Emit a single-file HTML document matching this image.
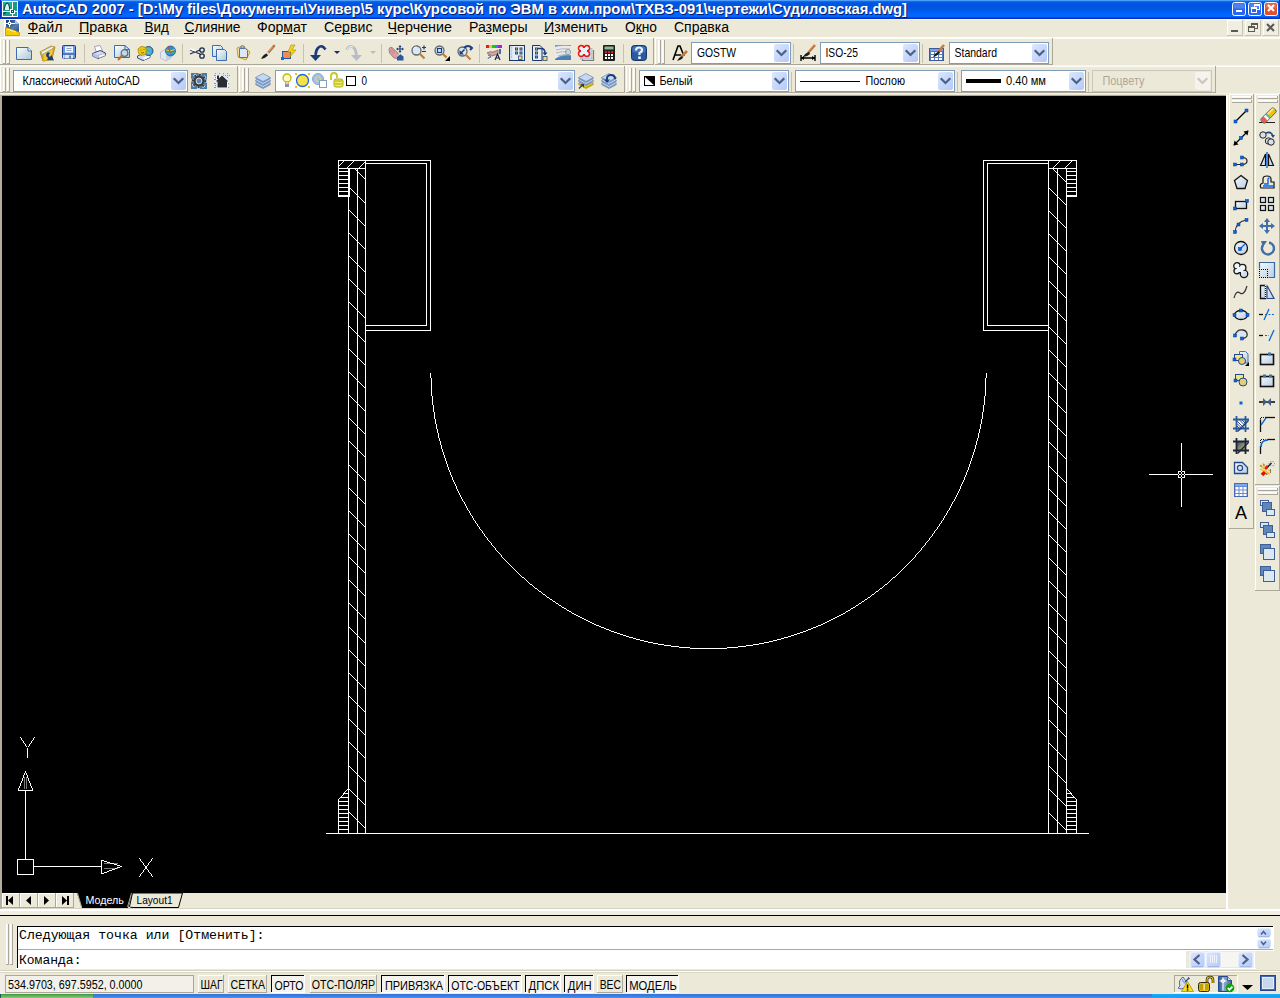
<!DOCTYPE html>
<html><head><meta charset="utf-8"><style>html,body{margin:0;padding:0;background:#ece9d8;overflow:hidden}svg{display:block}</style></head>
<body><svg width="1280" height="998" viewBox="0 0 1280 998"><defs>
<linearGradient id="gBtn" x1="0" y1="0" x2="1" y2="1"><stop offset="0" stop-color="#dde7fe"/><stop offset="1" stop-color="#b3c9f7"/></linearGradient>
<linearGradient id="gDoc" x1="0" y1="0" x2="1" y2="1"><stop offset="0" stop-color="#ffffff"/><stop offset="1" stop-color="#a9c6d6"/></linearGradient>
<linearGradient id="gBlueSq" x1="0" y1="0" x2="1" y2="1"><stop offset="0" stop-color="#f4f8fc"/><stop offset="1" stop-color="#b9cde4"/></linearGradient>
<linearGradient id="gFolder" x1="0" y1="0" x2="0" y2="1"><stop offset="0" stop-color="#ffe680"/><stop offset="1" stop-color="#e6a800"/></linearGradient>
</defs>
<rect x="0" y="0" width="1280" height="998" fill="#ece9d8" />
<rect x="0" y="0" width="1280" height="1" fill="#4d9dfb" />
<rect x="0" y="1" width="1280" height="1" fill="#0a6af4" />
<rect x="0" y="2" width="1280" height="1" fill="#005ce6" />
<rect x="0" y="3" width="1280" height="1" fill="#0055df" />
<rect x="0" y="4" width="1280" height="1" fill="#0054e1" />
<rect x="0" y="5" width="1280" height="1" fill="#0054e1" />
<rect x="0" y="6" width="1280" height="1" fill="#0054e1" />
<rect x="0" y="7" width="1280" height="1" fill="#0055e3" />
<rect x="0" y="8" width="1280" height="1" fill="#0056e5" />
<rect x="0" y="9" width="1280" height="1" fill="#0058e8" />
<rect x="0" y="10" width="1280" height="1" fill="#005aed" />
<rect x="0" y="11" width="1280" height="1" fill="#005ef2" />
<rect x="0" y="12" width="1280" height="1" fill="#0060f6" />
<rect x="0" y="13" width="1280" height="1" fill="#0064fb" />
<rect x="0" y="14" width="1280" height="1" fill="#0066ff" />
<rect x="0" y="15" width="1280" height="1" fill="#0066ff" />
<rect x="0" y="16" width="1280" height="1" fill="#0066fd" />
<rect x="0" y="17" width="1280" height="1" fill="#0046d8" />
<rect x="0" y="18" width="1280" height="1" fill="#0033c6" />
<rect x="0" y="0" width="1" height="19" fill="#0030b8" />
<rect x="1" y="1" width="1" height="18" fill="#0046d8" />
<rect x="1279" y="0" width="1" height="19" fill="#0030b8" />
<rect x="2" y="1" width="16" height="16" fill="#fff" />
<rect x="3" y="2" width="14" height="14" fill="#20a08c" />
<path d="M3 2 h8 v8 h-8z" fill="#28b09a"/>
<path d="M4 10 Q5 4 7 3 Q9 3 10 10" fill="#d8f4ee" stroke="#0a4a3e" stroke-width="1.2"/>
<path d="M3.5 14 L6 12" stroke="#0a3a30" stroke-width="1.2"/>
<rect x="12" y="2" width="1" height="14" fill="#fff" />
<rect x="3" y="11" width="14" height="1" fill="#fff" />
<rect x="10" y="9" width="5" height="5" fill="#fff" />
<rect x="11" y="10" width="3" height="3" fill="#0b5a4a" />
<rect x="12" y="11" width="1" height="1" fill="#fff" />
<rect x="13" y="2" width="3" height="8" fill="#1a9a84" />
<text x="23" y="15" font-family="Liberation Sans" font-size="14.6" font-weight="bold" fill="#0a1a6a" textLength="885" lengthAdjust="spacingAndGlyphs" >AutoCAD 2007 - [D:\My files\Документы\Универ\5 курс\Курсовой по ЭВМ в хим.пром\ТХВЗ-091\чертежи\Судиловская.dwg]</text>
<text x="22" y="14" font-family="Liberation Sans" font-size="14.6" font-weight="bold" fill="#fff" textLength="885" lengthAdjust="spacingAndGlyphs" >AutoCAD 2007 - [D:\My files\Документы\Универ\5 курс\Курсовой по ЭВМ в хим.пром\ТХВЗ-091\чертежи\Судиловская.dwg]</text>
<rect x="1232.5" y="2.5" width="13" height="13" rx="2" fill="#2a66f0" stroke="#fff" stroke-width="1"/>
<rect x="1233.5" y="3.5" width="11" height="5" rx="1" fill="#fff" opacity="0.18"/>
<rect x="1236" y="10" width="6" height="2" fill="#fff" />
<rect x="1248.5" y="2.5" width="13" height="13" rx="2" fill="#2a66f0" stroke="#fff" stroke-width="1"/>
<rect x="1249.5" y="3.5" width="11" height="5" rx="1" fill="#fff" opacity="0.18"/>
<rect x="1254.5" y="4.5" width="5" height="5" fill="none" stroke="#fff"/>
<rect x="1254" y="4" width="6" height="2" fill="#fff" />
<rect x="1251.5" y="7.5" width="5" height="5" fill="#2a66f0" stroke="#fff"/>
<rect x="1251" y="7" width="6" height="2" fill="#fff" />
<rect x="1264.5" y="2.5" width="13" height="13" rx="2" fill="#e0502a" stroke="#fff" stroke-width="1"/>
<rect x="1265.5" y="3.5" width="11" height="5" rx="1" fill="#fff" opacity="0.18"/>
<path d="M1268 5 L1274 11 M1274 5 L1268 11" stroke="#fff" stroke-width="2"/>
<rect x="0" y="19" width="1280" height="1" fill="#fbf6e6" />
<rect x="0" y="37" width="1280" height="1" fill="#fff" />
<rect x="0" y="38" width="1280" height="1" fill="#fbfaf4" />
<rect x="4" y="20" width="16" height="16" fill="#fff" />
<defs><linearGradient id="gMi" x1="0" y1="0" x2="1" y2="1"><stop offset="0" stop-color="#10407e"/><stop offset="0.6" stop-color="#5a7cb0"/><stop offset="1" stop-color="#1a4a8a"/></linearGradient></defs>
<path d="M6 20 H15 L19 24 V33 H6 Z" fill="url(#gMi)"/>
<path d="M15 20 L19 24 H15 Z" fill="#b4c6dc"/>
<rect x="6" y="23" width="9" height="1" fill="#fff" />
<rect x="9" y="20" width="1" height="7" fill="#fff" />
<rect x="8" y="22" width="3" height="3" fill="#fff" />
<rect x="9" y="23" width="1" height="1" fill="#1a4a8a" />
<path d="M5.5 27.5 L19.5 32.5 V35.5 H5.5 Z" fill="#f2cc00" stroke="#d09c00" stroke-width="1"/>
<path d="M7 29 L16 32" stroke="#fff2a0" stroke-width="1.2"/>
<text x="27.5" y="32" font-family="Liberation Sans" font-size="13.8" font-weight="normal" fill="#000" textLength="35.0" lengthAdjust="spacingAndGlyphs" >Файл</text>
<text x="79.0" y="32" font-family="Liberation Sans" font-size="13.8" font-weight="normal" fill="#000" textLength="48.5" lengthAdjust="spacingAndGlyphs" >Правка</text>
<text x="144.5" y="32" font-family="Liberation Sans" font-size="13.8" font-weight="normal" fill="#000" textLength="24.30000000000001" lengthAdjust="spacingAndGlyphs" >Вид</text>
<text x="184.5" y="32" font-family="Liberation Sans" font-size="13.8" font-weight="normal" fill="#000" textLength="56.0" lengthAdjust="spacingAndGlyphs" >Слияние</text>
<text x="257.0" y="32" font-family="Liberation Sans" font-size="13.8" font-weight="normal" fill="#000" textLength="50.0" lengthAdjust="spacingAndGlyphs" >Формат</text>
<text x="324.0" y="32" font-family="Liberation Sans" font-size="13.8" font-weight="normal" fill="#000" textLength="48.5" lengthAdjust="spacingAndGlyphs" >Сервис</text>
<text x="387.5" y="32" font-family="Liberation Sans" font-size="13.8" font-weight="normal" fill="#000" textLength="64.5" lengthAdjust="spacingAndGlyphs" >Черчение</text>
<text x="469.0" y="32" font-family="Liberation Sans" font-size="13.8" font-weight="normal" fill="#000" textLength="58.5" lengthAdjust="spacingAndGlyphs" >Размеры</text>
<text x="544.0" y="32" font-family="Liberation Sans" font-size="13.8" font-weight="normal" fill="#000" textLength="64.0" lengthAdjust="spacingAndGlyphs" >Изменить</text>
<text x="625.0" y="32" font-family="Liberation Sans" font-size="13.8" font-weight="normal" fill="#000" textLength="32.0" lengthAdjust="spacingAndGlyphs" >Окно</text>
<text x="674.0" y="32" font-family="Liberation Sans" font-size="13.8" font-weight="normal" fill="#000" textLength="55.0" lengthAdjust="spacingAndGlyphs" >Справка</text>
<rect x="28" y="33" width="10" height="1" fill="#000" />
<rect x="79" y="33" width="10" height="1" fill="#000" />
<rect x="144" y="33" width="10" height="1" fill="#000" />
<rect x="184" y="33" width="10" height="1" fill="#000" />
<rect x="283" y="33" width="10" height="1" fill="#000" />
<rect x="342" y="33" width="8" height="1" fill="#000" />
<rect x="388" y="33" width="9" height="1" fill="#000" />
<rect x="486" y="33" width="6" height="1" fill="#000" />
<rect x="544" y="33" width="10" height="1" fill="#000" />
<rect x="636" y="33" width="6" height="1" fill="#000" />
<rect x="700" y="33" width="7" height="1" fill="#000" />
<rect x="1227" y="20" width="16" height="1" fill="#fff" />
<rect x="1227" y="20" width="1" height="16" fill="#fff" />
<rect x="1227" y="35" width="16" height="1" fill="#c8c4b0" />
<rect x="1242" y="20" width="1" height="16" fill="#c8c4b0" />
<rect x="1228" y="21" width="14" height="14" fill="#f0eee4" />
<rect x="1231" y="30" width="7" height="2" fill="#5a5a50" />
<rect x="1245" y="20" width="16" height="1" fill="#fff" />
<rect x="1245" y="20" width="1" height="16" fill="#fff" />
<rect x="1245" y="35" width="16" height="1" fill="#c8c4b0" />
<rect x="1260" y="20" width="1" height="16" fill="#c8c4b0" />
<rect x="1246" y="21" width="14" height="14" fill="#f0eee4" />
<rect x="1251.5" y="23.5" width="6" height="5" fill="none" stroke="#5a5a50"/>
<rect x="1251" y="23" width="7" height="2" fill="#5a5a50" />
<rect x="1248.5" y="26.5" width="6" height="5" fill="#f0eee4" stroke="#5a5a50"/>
<rect x="1248" y="26" width="7" height="2" fill="#5a5a50" />
<rect x="1263" y="20" width="16" height="1" fill="#fff" />
<rect x="1263" y="20" width="1" height="16" fill="#fff" />
<rect x="1263" y="35" width="16" height="1" fill="#c8c4b0" />
<rect x="1278" y="20" width="1" height="16" fill="#c8c4b0" />
<rect x="1264" y="21" width="14" height="14" fill="#f0eee4" />
<path d="M1267 24 L1274 31 M1274 24 L1267 31" stroke="#5a5a50" stroke-width="2"/>
<rect x="0" y="39" width="1280" height="26" fill="#ece9d8" />
<rect x="0" y="38" width="1" height="27" fill="#fff" />
<rect x="0" y="38" width="654" height="1" fill="#fbfaf4" />
<rect x="653" y="38" width="1" height="27" fill="#aca899" />
<rect x="0" y="64" width="654" height="1" fill="#aca899" />
<rect x="3" y="40" width="1" height="24" fill="#fff" />
<rect x="4" y="40" width="1" height="24" fill="#f7f5ec" />
<rect x="5" y="40" width="1" height="24" fill="#aca899" />
<rect x="3" y="63" width="3" height="1" fill="#aca899" />
<rect x="7" y="40" width="1" height="24" fill="#fff" />
<rect x="8" y="40" width="1" height="24" fill="#f7f5ec" />
<rect x="9" y="40" width="1" height="24" fill="#aca899" />
<rect x="7" y="63" width="3" height="1" fill="#aca899" />
<rect x="655" y="38" width="1" height="27" fill="#fff" />
<rect x="655" y="38" width="398" height="1" fill="#fbfaf4" />
<rect x="1052" y="38" width="1" height="27" fill="#aca899" />
<rect x="655" y="64" width="398" height="1" fill="#aca899" />
<rect x="658" y="40" width="1" height="24" fill="#fff" />
<rect x="659" y="40" width="1" height="24" fill="#f7f5ec" />
<rect x="660" y="40" width="1" height="24" fill="#aca899" />
<rect x="658" y="63" width="3" height="1" fill="#aca899" />
<rect x="662" y="40" width="1" height="24" fill="#fff" />
<rect x="663" y="40" width="1" height="24" fill="#f7f5ec" />
<rect x="664" y="40" width="1" height="24" fill="#aca899" />
<rect x="662" y="63" width="3" height="1" fill="#aca899" />
<rect x="0" y="65" width="1280" height="1" fill="#f7f5ec" />
<rect x="0" y="66" width="1280" height="1" fill="#fff" />
<rect x="0" y="66" width="1" height="27" fill="#fff" />
<rect x="0" y="66" width="238" height="1" fill="#fbfaf4" />
<rect x="237" y="66" width="1" height="27" fill="#aca899" />
<rect x="0" y="92" width="238" height="1" fill="#aca899" />
<rect x="3" y="68" width="1" height="24" fill="#fff" />
<rect x="4" y="68" width="1" height="24" fill="#f7f5ec" />
<rect x="5" y="68" width="1" height="24" fill="#aca899" />
<rect x="3" y="91" width="3" height="1" fill="#aca899" />
<rect x="7" y="68" width="1" height="24" fill="#fff" />
<rect x="8" y="68" width="1" height="24" fill="#f7f5ec" />
<rect x="9" y="68" width="1" height="24" fill="#aca899" />
<rect x="7" y="91" width="3" height="1" fill="#aca899" />
<rect x="239" y="66" width="1" height="27" fill="#fff" />
<rect x="239" y="66" width="386" height="1" fill="#fbfaf4" />
<rect x="624" y="66" width="1" height="27" fill="#aca899" />
<rect x="239" y="92" width="386" height="1" fill="#aca899" />
<rect x="242" y="68" width="1" height="24" fill="#fff" />
<rect x="243" y="68" width="1" height="24" fill="#f7f5ec" />
<rect x="244" y="68" width="1" height="24" fill="#aca899" />
<rect x="242" y="91" width="3" height="1" fill="#aca899" />
<rect x="246" y="68" width="1" height="24" fill="#fff" />
<rect x="247" y="68" width="1" height="24" fill="#f7f5ec" />
<rect x="248" y="68" width="1" height="24" fill="#aca899" />
<rect x="246" y="91" width="3" height="1" fill="#aca899" />
<rect x="626" y="66" width="1" height="27" fill="#fff" />
<rect x="626" y="66" width="590" height="1" fill="#fbfaf4" />
<rect x="1215" y="66" width="1" height="27" fill="#aca899" />
<rect x="626" y="92" width="590" height="1" fill="#aca899" />
<rect x="629" y="68" width="1" height="24" fill="#fff" />
<rect x="630" y="68" width="1" height="24" fill="#f7f5ec" />
<rect x="631" y="68" width="1" height="24" fill="#aca899" />
<rect x="629" y="91" width="3" height="1" fill="#aca899" />
<rect x="633" y="68" width="1" height="24" fill="#fff" />
<rect x="634" y="68" width="1" height="24" fill="#f7f5ec" />
<rect x="635" y="68" width="1" height="24" fill="#aca899" />
<rect x="633" y="91" width="3" height="1" fill="#aca899" />
<rect x="0" y="93" width="1280" height="1" fill="#f4f2e6" />
<rect x="0" y="94" width="1280" height="1" fill="#e8e5d4" />
<rect x="84" y="44" width="1" height="19" fill="#c5c2b0" />
<rect x="182" y="44" width="1" height="19" fill="#c5c2b0" />
<rect x="303" y="44" width="1" height="19" fill="#c5c2b0" />
<rect x="381" y="44" width="1" height="19" fill="#c5c2b0" />
<rect x="479" y="44" width="1" height="19" fill="#c5c2b0" />
<rect x="623" y="44" width="1" height="19" fill="#c5c2b0" />
<rect x="793" y="44" width="1" height="19" fill="#c5c2b0" />
<rect x="922" y="44" width="1" height="19" fill="#c5c2b0" />
<rect x="791" y="72" width="1" height="20" fill="#c5c2b0" />
<rect x="957" y="72" width="1" height="20" fill="#c5c2b0" />
<rect x="1088" y="72" width="1" height="20" fill="#c5c2b0" />
<g transform="translate(16,45)"><path d="M0.5 2.5 H12 L15.5 6 V14.5 H0.5 Z" fill="url(#gDoc)" stroke="#3c6cb4"/><path d="M12 2.5 V6 H15.5" fill="#fff" stroke="#3c6cb4"/></g>
<g transform="translate(39,45)"><path d="M1 7 L12 1 L16 2 L13 14 L4 16 Z" fill="#d8aa30" stroke="#b08418" stroke-width="0.8"/><path d="M2 7 L13 1.5 L14.5 2.5 L5 12 Z" fill="#eef4fb" stroke="#9ab0c8" stroke-width="0.6"/><path d="M4 9 L15 3 L12 15 L4 16 Z" fill="#f0c838" stroke="#c09820" stroke-width="0.8"/><path d="M9 7 Q5 10 9 13 L8 15 L15 15.5 L12.5 10 L11 12 Q8.5 10.5 11 8 Z" fill="#1a3c7a"/></g>
<g transform="translate(62,45)"><rect x="0.5" y="0.5" width="13" height="13" rx="1" fill="#6a9ae6" stroke="#24408a"/><rect x="3" y="1.5" width="8" height="6" fill="#f4f8ff"/><path d="M4.5 3.5 h5 M4.5 5.5 h5" stroke="#8aa2c8"/><rect x="1" y="8.5" width="12" height="1" fill="#3a5aa0"/><rect x="3" y="10" width="8" height="3.5" fill="#dde6ee"/><rect x="7" y="10.5" width="2" height="3" fill="#6a8a6a"/><rect x="1" y="10" width="1.5" height="3.5" fill="#bfe0ff"/></g>
<g transform="translate(92,45)"><path d="M2.5 1.5 L8 0.5 L10.5 5.5 L4.5 7.5 Z" fill="#fff" stroke="#8890b0" stroke-width="0.8"/><path d="M0.5 8.5 L8 5.5 L13.5 8 V10.5 L6 13.5 L0.5 11 Z" fill="#d6dcf0" stroke="#3c4680"/><path d="M6 10.5 L12.5 8.5 L13.5 10.5 L7 13 Z" fill="#fff" stroke="#8890b0" stroke-width="0.6"/><path d="M0.5 11 L6 13.5 V10 L0.5 8.5" fill="#b8c0e0"/></g>
<g transform="translate(114,45)"><path d="M0.5 0.5 H11 L15.5 4.5 V12.5 H0.5 Z" fill="url(#gDoc)" stroke="#3c6cb4"/><path d="M11 0.5 V4.5 H15.5" fill="none" stroke="#3c6cb4"/><circle cx="10.5" cy="8" r="3.3" fill="#c0d8ea" stroke="#606a78" stroke-width="1.2"/><path d="M8 10.5 L4 15" stroke="#b87030" stroke-width="2"/></g>
<g transform="translate(137,45)"><path d="M0.5 11 L7 8 L13 10.5 V12.5 L6 15.5 L0.5 13 Z" fill="#d6dcf0" stroke="#3c4680"/><path d="M6 12.5 L12 10.5 L13 12 L7 15 Z" fill="#fff"/><circle cx="11.5" cy="6" r="4.5" fill="#48a8e0" stroke="#1a4a80"/><path d="M9 3 q3 2 5 1 M8 8 q3 -1 6 1" stroke="#7ad05a" stroke-width="1" fill="none"/><path d="M1 4 L4 1.5 L8 2 L9.5 5 L8.5 9.5 L4 10.5 L1.5 8 Z" fill="#f0c818" stroke="#a88400" stroke-width="0.8"/><path d="M3.5 5 h1 M6.5 4.5 h1 M4 7.5 q1.5 1 3 0" stroke="#7a5a00" stroke-width="0.9" fill="none"/></g>
<g transform="translate(160,45)"><path d="M0.5 7 L6 4 L11 6.5 V13 L6 16 L0.5 13 Z" fill="#e4e8f2" stroke="#b0b8c8" stroke-width="0.8"/><path d="M6 9.5 V16 L11 13 V6.5 Z" fill="#c8d0e0"/><circle cx="10.5" cy="6" r="5" fill="#2c8ed6" stroke="#185a98" stroke-width="0.8"/><path d="M6 5 Q10 7 15 4.5" stroke="#e8d020" stroke-width="1" fill="none"/><path d="M8.5 1.5 Q9 7 12 10.5" stroke="#e03a2a" stroke-width="1" fill="none"/><path d="M6.5 8 Q11 9 14.5 7.5" stroke="#60c040" stroke-width="0.9" fill="none"/></g>
<g transform="translate(189,45)"><path d="M1 5 L11 9 M1 9 L11 5" stroke="#1c2a4a" stroke-width="1.2"/><path d="M1 4 l6 2" stroke="#fff" stroke-width="1.5"/><circle cx="13" cy="5" r="2.2" fill="none" stroke="#1c2a4a" stroke-width="1.3"/><circle cx="13" cy="11" r="2.2" fill="none" stroke="#1c2a4a" stroke-width="1.3"/></g>
<g transform="translate(212,45)"><path d="M0.5 0.5 h8 l2 2 v9 h-10 z" fill="url(#gDoc)" stroke="#3c6cb4"/><path d="M4.5 4.5 h8 l2 2 v9 h-10 z" fill="url(#gDoc)" stroke="#3c6cb4"/></g>
<g transform="translate(235,45)"><path d="M2 3 l6 -2 l7 6 l-4 8 l-8 -3 z" fill="#f2dca0" stroke="#c8a040"/><path d="M4.5 3.5 h6 l2 2 v7 h-8 z" fill="#dce8f4" stroke="#4a76b8"/><path d="M6 1 h3 v2 h-3z" fill="#fff" stroke="#707070"/></g>
<g transform="translate(259,45)"><path d="M15 1 L9 8" stroke="#b87848" stroke-width="2.6" stroke-linecap="round"/><path d="M13.5 2 L10 6" stroke="#e8a870" stroke-width="0.8"/><path d="M9.5 7.5 L7.5 9.5" stroke="#d0d8e0" stroke-width="2.4"/><path d="M7.5 8.5 Q4 9.5 2 14 Q6 13.5 9 10.5 Z" fill="#1c1c1c"/></g>
<g transform="translate(281,45)"><rect x="1.5" y="6.5" width="8" height="7" fill="#f08a58" stroke="#2a58a8"/><rect x="0" y="12" width="3" height="3" fill="#0a6ae8"/><path d="M10 0 l4 0 l-3 5 h4 l-6 7 l1 -5 h-3 z" fill="#f8d418" stroke="#a88a00" stroke-width="0.6"/></g>
<g transform="translate(310,45)"><path d="M15.5 4.5 Q12 -1 8 3 Q6 5 5.5 10" stroke="#1a3c7a" stroke-width="2.6" fill="none"/><path d="M0 10 H11 L5.5 16 Z" fill="#1a3c7a"/></g>
<g transform="translate(346,45)"><path d="M0.5 4.5 Q4 -1 8 3 Q10 5 10.5 10" stroke="#b8bcc8" stroke-width="2.6" fill="none"/><path d="M5 10 H16 L10.5 16 Z" fill="#b8bcc8"/><path d="M1 4 Q4 0 7 2" stroke="#fff" stroke-width="0.8" fill="none"/></g>
<g transform="translate(388,45)"><path d="M1 4 Q1.5 1.5 4 2.5 L10 8 L11.5 11 L9 13.5 L6 13 L1.5 8 Z" fill="#d8a0a0" stroke="#a07070" stroke-width="0.8"/><path d="M3 3.5 l4 3.5 M2 5.5 l4 3" stroke="#b07878" stroke-width="0.7"/><path d="M9 12 L12 9 L15.5 11.5 V15.5 H9 Z" fill="#2a5a9a"/><path d="M9.5 11 L12 9" stroke="#fff" stroke-width="0.8"/><path d="M12 1 V7 M9 4 H15" stroke="#1a3c7a" stroke-width="1.2"/><path d="M10.5 2 L12 0 L13.5 2 Z M10.5 6 L12 8 L13.5 6 Z M10 2.5 L8 4 L10 5.5 Z M14 2.5 L16 4 L14 5.5 Z" fill="#1a3c7a"/></g>
<g transform="translate(411,45)"><circle cx="5.5" cy="5.5" r="4.5" fill="#d8e8f4" stroke="#606870" stroke-width="1.3"/><path d="M2.5 3.5 q1 -1.5 3 -1.5" stroke="#fff" fill="none"/><path d="M8.5 8.5 L13.5 13.5" stroke="#c0803a" stroke-width="2.3"/><path d="M11 2.5 h4 M13 0.5 v4 M11 6.5 h4" stroke="#1a3c7a" stroke-width="1.2"/></g>
<g transform="translate(434,45)"><circle cx="5.5" cy="5.5" r="4.5" fill="#d8e8f4" stroke="#606870" stroke-width="1.3"/><rect x="3.5" y="3.5" width="4" height="4" fill="none" stroke="#1a3c7a" stroke-width="1.2"/><path d="M8.5 8.5 L12.5 12.5" stroke="#c0803a" stroke-width="2.3"/><path d="M11 16 L16 11 V16 Z" fill="#000"/></g>
<g transform="translate(457,45)"><circle cx="5.5" cy="6.5" r="4.5" fill="#d8e8f4" stroke="#606870" stroke-width="1.3"/><path d="M8.5 9.5 L13.5 14.5" stroke="#c0803a" stroke-width="2.3"/><path d="M3.5 8.5 L7.5 4.5" stroke="#1a3c7a" stroke-width="1.6"/><path d="M2.5 5 V9.5 H7 Z" fill="#1a3c7a"/><path d="M7 3 Q11 -1 15 3 L13 5" stroke="#1a3c7a" stroke-width="2" fill="none"/></g>
<g transform="translate(486,45)"><rect x="0" y="0" width="3" height="3" fill="#e01c1c"/><rect x="3" y="0" width="3" height="3" fill="#e8c81c"/><rect x="6" y="0" width="3" height="3" fill="#1cc81c"/><rect x="9" y="0" width="3" height="3" fill="#1c8ce8"/><rect x="12" y="0" width="4" height="3" fill="#b01ce0"/><path d="M1 8 q3 -2 6 -1 l5 -2 v4 l-6 2 z" fill="#d8a09a" stroke="#8a5a58" stroke-width="0.7"/><path d="M2 10 q3 1 3 2 q-3 0 -3 2" fill="none" stroke="#3c6cb4"/><path d="M9 15 l2.5 -6 l2.5 6 M10 13 h3" stroke="#1c2a4a" stroke-width="1.2" fill="none"/><rect x="13" y="4" width="2" height="5" fill="#3c6cb4"/></g>
<g transform="translate(509,45)"><rect x="0.5" y="0.5" width="15" height="15" fill="#e8eef8" stroke="#1a3470"/><rect x="1" y="1" width="2.5" height="14" fill="#d0dcf0"/><g fill="#f0c818"><rect x="2" y="2" width="1" height="1.5"/><rect x="2" y="5" width="1" height="1.5"/><rect x="2" y="8" width="1" height="1.5"/><rect x="2" y="11" width="1" height="1.5"/></g><g fill="#2a4a7a"><rect x="6" y="2.5" width="3" height="3"/><rect x="10.5" y="2.5" width="3" height="3"/><rect x="6" y="6.5" width="3" height="3"/><rect x="10.5" y="6.5" width="3" height="3"/></g><g fill="#e8d858"><rect x="7" y="3.5" width="1" height="1"/><rect x="11.5" y="3.5" width="1" height="1"/><rect x="11.5" y="7.5" width="1" height="1"/></g><rect x="7" y="7.5" width="1" height="1" fill="#60d0c0"/><rect x="9.5" y="11" width="3.5" height="3.5" fill="#f0e070" stroke="#2a4a7a" stroke-width="0.8"/></g>
<g transform="translate(532,45)"><path d="M0.5 0.5 H8 L10 2.5 V15.5 H0.5 Z" fill="#e8eef8" stroke="#1a3470"/><g fill="#2a4a7a"><rect x="3" y="2.5" width="3" height="3"/><rect x="3" y="6.5" width="3" height="3"/><rect x="3" y="10.5" width="3" height="3"/></g><g fill="#e8d858"><rect x="4" y="3.5" width="1" height="1"/><rect x="4" y="7.5" width="1" height="1"/></g><rect x="4" y="11.5" width="1" height="1" fill="#60d0c0"/><path d="M6 3.5 H9 Q13 3.5 13 8" stroke="#1a3c7a" stroke-width="1.5" fill="none"/><path d="M10.5 7.5 H15.5 L13 10.5 Z" fill="#1a3c7a"/><rect x="11" y="11.5" width="4" height="4" fill="#f0e070" stroke="#2a4a7a" stroke-width="0.8"/></g>
<g transform="translate(555,45)"><rect x="0" y="0" width="16" height="15" fill="#6aa0d0"/><path d="M0 2 Q6 0 16 1 V10 Q8 8 0 14 Z" fill="#e8eaee"/><path d="M1 5 Q7 3 15 4 M1 8 Q7 6 14 7 M3 11 Q8 9 12 10" stroke="#b0b4bc" stroke-width="1" fill="none"/><circle cx="13" cy="7" r="2.5" fill="none" stroke="#9098a0"/><path d="M0 14 Q8 9 16 11 V15 H0 Z" fill="#3a6a9a" opacity="0.6"/></g>
<g transform="translate(578,45)"><path d="M4.5 5 V15.5 H15.5 V5" fill="none" stroke="#7a7a7a" stroke-width="1.2"/><rect x="2.5" y="3.5" width="11.5" height="10.5" fill="#c8d8ea" stroke="#a0a8b0" stroke-width="0.6"/><g stroke="#e81818" stroke-width="1.7" fill="#e8f0f8"><circle cx="3.2" cy="3.2" r="2.6"/><circle cx="8.8" cy="3.2" r="2.6"/><circle cx="3.2" cy="8.8" r="2.6"/><circle cx="8.8" cy="8.8" r="2.6"/></g><g fill="#e8f0f8"><circle cx="3.2" cy="3.2" r="1.8"/><circle cx="8.8" cy="3.2" r="1.8"/><circle cx="3.2" cy="8.8" r="1.8"/><circle cx="8.8" cy="8.8" r="1.8"/><rect x="3" y="3" width="6" height="6"/></g></g>
<g transform="translate(601,45)"><rect x="2" y="0" width="12" height="16" rx="1" fill="#1c1c1c"/><rect x="3.5" y="1.5" width="9" height="3" fill="#8ab898"/><g fill="#e01c1c"><rect x="4" y="6" width="2" height="2"/><rect x="7" y="6" width="2" height="2"/><rect x="10" y="6" width="2" height="2"/></g><g fill="#fff"><rect x="4" y="9" width="2" height="2"/><rect x="7" y="9" width="2" height="2"/><rect x="10" y="9" width="2" height="2"/><rect x="4" y="12" width="2" height="2"/><rect x="7" y="12" width="2" height="2"/><rect x="10" y="12" width="2" height="2"/></g></g>
<g transform="translate(631,45)"><rect x="0.5" y="0.5" width="15" height="15" rx="3" fill="#2a5aa0" stroke="#143470"/><rect x="1.5" y="1.5" width="13" height="6" rx="2" fill="#5a90d0" opacity="0.5"/><path d="M5 5.5 Q5 2.5 8 2.5 Q11 2.5 11 5 Q11 7 8.5 8 V10" stroke="#e8f0ff" stroke-width="2.2" fill="none"/><rect x="7.2" y="11.5" width="2.6" height="2.4" fill="#fff"/></g>
<g transform="translate(672,45)"><path d="M1 15 L6 1 h2 l4 10 M3 10 h6" stroke="#000" stroke-width="1.6" fill="none"/><path d="M15 6 L9 12" stroke="#c87840" stroke-width="2.6"/><path d="M10 11 q-3 1 -5 5 q4 -1 6 -3z" fill="#1c1c1c"/></g>
<g transform="translate(800,45)"><path d="M15 0 L8 8" stroke="#c87840" stroke-width="2.6"/><path d="M9 7 q-4 1 -6 5 q4 0 7 -3z" fill="#1c1c1c"/><path d="M1 10 v6 M15 10 v6 M1 13 h14" stroke="#000" stroke-width="1.4"/><path d="M1 13 l3 -2 v4z M15 13 l-3 -2 v4z" fill="#000"/></g>
<g transform="translate(929,45)"><rect x="0.5" y="3.5" width="14" height="12" fill="#5a7ab8" stroke="#3c5a98"/><rect x="1" y="4" width="13" height="2" fill="#7aa0f0"/><g fill="#fff"><rect x="2" y="7" width="3" height="2"/><rect x="6" y="7" width="3" height="2"/><rect x="10" y="7" width="3" height="2"/><rect x="2" y="10" width="3" height="2"/><rect x="6" y="10" width="3" height="2"/><rect x="10" y="10" width="3" height="2"/><rect x="2" y="13" width="3" height="2"/><rect x="6" y="13" width="3" height="2"/><rect x="10" y="13" width="3" height="2"/></g><path d="M15 0 L9 7" stroke="#c87840" stroke-width="2.6"/><path d="M10 6 q-4 2 -6 6 q4 -1 7 -4z" fill="#1c1c1c"/></g>
<path d="M334 51 h6 l-3 3z" fill="#1c2a6a"/>
<path d="M370 51 h6 l-3 3z" fill="#b8bcc8"/>
<rect x="691" y="42" width="100" height="22" fill="#7f9db9" />
<rect x="692" y="43" width="98" height="20" fill="#fff" />
<rect x="774" y="44" width="15" height="18" rx="2" fill="url(#gBtn)"/>
<path d="M777.5 51.0 L781.5 55.0 L785.5 51.0" stroke="#4d6185" stroke-width="2.2" fill="none" stroke-linecap="square"/>
<text x="697" y="57" font-family="Liberation Sans" font-size="12.2" font-weight="normal" fill="#000" textLength="39" lengthAdjust="spacingAndGlyphs" >GOSTW</text>
<rect x="820" y="42" width="100" height="22" fill="#7f9db9" />
<rect x="821" y="43" width="98" height="20" fill="#fff" />
<rect x="903" y="44" width="15" height="18" rx="2" fill="url(#gBtn)"/>
<path d="M906.5 51.0 L910.5 55.0 L914.5 51.0" stroke="#4d6185" stroke-width="2.2" fill="none" stroke-linecap="square"/>
<text x="825.5" y="57" font-family="Liberation Sans" font-size="12.2" font-weight="normal" fill="#000" textLength="32.5" lengthAdjust="spacingAndGlyphs" >ISO-25</text>
<rect x="949" y="42" width="100" height="22" fill="#7f9db9" />
<rect x="950" y="43" width="98" height="20" fill="#fff" />
<rect x="1032" y="44" width="15" height="18" rx="2" fill="url(#gBtn)"/>
<path d="M1035.5 51.0 L1039.5 55.0 L1043.5 51.0" stroke="#4d6185" stroke-width="2.2" fill="none" stroke-linecap="square"/>
<text x="954.5" y="57" font-family="Liberation Sans" font-size="12.2" font-weight="normal" fill="#000" textLength="42.5" lengthAdjust="spacingAndGlyphs" >Standard</text>
<rect x="13" y="70" width="175" height="22" fill="#7f9db9" />
<rect x="14" y="71" width="173" height="20" fill="#fff" />
<rect x="171" y="72" width="15" height="18" rx="2" fill="url(#gBtn)"/>
<path d="M174.5 79.0 L178.5 83.0 L182.5 79.0" stroke="#4d6185" stroke-width="2.2" fill="none" stroke-linecap="square"/>
<text x="22.5" y="85" font-family="Liberation Sans" font-size="12.2" font-weight="normal" fill="#000" textLength="117.3" lengthAdjust="spacingAndGlyphs" >Классический AutoCAD</text>
<g transform="translate(191,73)"><rect x="0" y="0" width="16" height="16" fill="#4a7aa8"/><circle cx="8" cy="8" r="6.3" fill="none" stroke="#f4f4f4" stroke-width="3.4" stroke-dasharray="2.6 2.35" transform="rotate(-10 8 8)"/><circle cx="8" cy="8" r="6" fill="none" stroke="#3c3c3c" stroke-width="2.6" stroke-dasharray="2 2.7" transform="rotate(-8 8 8)"/><circle cx="8" cy="8" r="4.2" fill="none" stroke="#3c3c3c" stroke-width="2.4"/><circle cx="8" cy="8" r="2.9" fill="#5a88b8" stroke="#e8e8e8" stroke-width="0.9"/></g>
<g transform="translate(214,73)"><rect x="0" y="0" width="16" height="16" fill="#dfe6ee"/><path d="M1.5 0 V16 M5.5 0 V3 M9.5 0 V3 M13.5 0 V5 M0 2.5 H2 M11 2.5 H16 M0 6.5 H2 M0 10.5 H2 M0 14.5 H2 M14 10.5 H16 M14 14.5 H16 M5.5 14 V16 M9.5 14 V16" stroke="#8898a8" stroke-width="1" stroke-dasharray="1 1"/><path d="M1.5 8.5 L8 2.5 L14.5 8.5 H13 V14.5 H3.5 V8.5 Z M3 2.5 H5 V6 H3 Z" fill="#fff" stroke="#fff" stroke-width="1.4"/><path d="M1.5 8.5 L8 2.5 L14.5 8.5 H13 V14.5 H3.5 V8.5 Z M3 2.5 H5 V6 H3 Z" fill="#2a2c30"/></g>
<g transform="translate(255,73)"><path d="M0.5 10.5 L8 6.5 L15.5 10.5 L8 14.5 Z" fill="#c4d8f0" stroke="#6a88b8" stroke-width="0.7"/><path d="M0.5 10.5 V12 L8 16 L15.5 12 V10.5 L8 14.5 Z" fill="#7894c0"/><path d="M0.5 7.5 L8 3.5 L15.5 7.5 L8 11.5 Z" fill="#c4d8f0" stroke="#6a88b8" stroke-width="0.7"/><path d="M0.5 7.5 V9 L8 13 L15.5 9 V7.5 L8 11.5 Z" fill="#7894c0"/><path d="M0.5 4.5 L8 0.5 L15.5 4.5 L8 8.5 Z" fill="#c4d8f0" stroke="#6a88b8" stroke-width="0.7"/><path d="M0.5 4.5 V6 L8 10 L15.5 6 V4.5 L8 8.5 Z" fill="#7894c0"/></g>
<rect x="275" y="70" width="300" height="22" fill="#7f9db9" />
<rect x="276" y="71" width="298" height="20" fill="#fff" />
<rect x="558" y="72" width="15" height="18" rx="2" fill="url(#gBtn)"/>
<path d="M561.5 79.0 L565.5 83.0 L569.5 79.0" stroke="#4d6185" stroke-width="2.2" fill="none" stroke-linecap="square"/>
<g transform="translate(282.5,73)"><circle cx="4.5" cy="5" r="4" fill="#fffbd0" stroke="#c8b400" stroke-width="1.3"/><rect x="3" y="9" width="3" height="2" fill="#fffbd0" stroke="#c8b400" stroke-width="0.8"/><rect x="2.5" y="11" width="4" height="3" fill="#8a94b8"/></g>
<circle cx="302.5" cy="80.5" r="6" fill="#f8e048" stroke="#1f6ad8" stroke-width="1.3"/>
<g fill="#e8c818"><rect x="295" y="73" width="2" height="2"/><rect x="308" y="73" width="2" height="2"/><rect x="295" y="86" width="2" height="2"/><rect x="308" y="86" width="2" height="2"/></g>
<circle cx="318" cy="79" r="5.5" fill="#a4c0e0" stroke="#8aa8cc"/><circle cx="318" cy="79" r="2.5" fill="none" stroke="#e0d890"/><rect x="319.5" y="80.5" width="7" height="7" fill="#fff" stroke="#8a9ab8"/>
<path d="M331 80 v-4 q0 -3 3 -3 q3 0 3 3 v2" stroke="#c8c818" stroke-width="1.8" fill="none"/><rect x="334" y="79" width="9" height="8" rx="2" fill="#f0f05a" stroke="#a8a820"/><path d="M335 81 h7 M335 84 h7" stroke="#a8a820"/>
<rect x="346.5" y="76.5" width="9" height="9" fill="#fff" stroke="#000" stroke-width="1"/>
<text x="361.5" y="85" font-family="Liberation Sans" font-size="12.2" font-weight="normal" fill="#000" textLength="5.5" lengthAdjust="spacingAndGlyphs" >0</text>
<g transform="translate(578,73)"><path d="M0.5 10.5 L8 6.5 L15.5 10.5 L8 14.5 Z" fill="#f2d418" stroke="#a88a00" stroke-width="0.7"/><path d="M0.5 10.5 V12 L8 16 L15.5 12 V10.5 L8 14.5 Z" fill="#c8a800"/><path d="M0.5 7.5 L8 3.5 L15.5 7.5 L8 11.5 Z" fill="#c4d8f0" stroke="#6a88b8" stroke-width="0.7"/><path d="M0.5 7.5 V9 L8 13 L15.5 9 V7.5 L8 11.5 Z" fill="#7894c0"/><path d="M0.5 4.5 L8 0.5 L15.5 4.5 L8 8.5 Z" fill="#c4d8f0" stroke="#6a88b8" stroke-width="0.7"/><path d="M0.5 4.5 V6 L8 10 L15.5 6 V4.5 L8 8.5 Z" fill="#7894c0"/><path d="M1 15.5 L4.5 12" stroke="#1c3c7c" stroke-width="1.3"/><path d="M2.5 11 H6 V14.5 Z" fill="#1c3c7c"/></g>
<g transform="translate(601,73)"><path d="M0.5 10.5 L8 6.5 L15.5 10.5 L8 14.5 Z" fill="#c4d8f0" stroke="#6a88b8" stroke-width="0.7"/><path d="M0.5 10.5 V12 L8 16 L15.5 12 V10.5 L8 14.5 Z" fill="#7894c0"/><path d="M0.5 7.5 L8 3.5 L15.5 7.5 L8 11.5 Z" fill="#c4d8f0" stroke="#6a88b8" stroke-width="0.7"/><path d="M0.5 7.5 V9 L8 13 L15.5 9 V7.5 L8 11.5 Z" fill="#7894c0"/><path d="M0.5 4.5 L8 0.5 L15.5 4.5 L8 8.5 Z" fill="#c4d8f0" stroke="#6a88b8" stroke-width="0.7"/><path d="M0.5 4.5 V6 L8 10 L15.5 6 V4.5 L8 8.5 Z" fill="#7894c0"/><path d="M6 8 Q5 2 10 2 Q14 2 14 6" stroke="#1c3c7c" stroke-width="2" fill="none"/><path d="M3 6.5 H9 L6 10 Z" fill="#1c3c7c"/></g>
<rect x="639" y="70" width="150" height="22" fill="#7f9db9" />
<rect x="640" y="71" width="148" height="20" fill="#fff" />
<rect x="772" y="72" width="15" height="18" rx="2" fill="url(#gBtn)"/>
<path d="M775.5 79.0 L779.5 83.0 L783.5 79.0" stroke="#4d6185" stroke-width="2.2" fill="none" stroke-linecap="square"/>
<rect x="644.5" y="76.5" width="10" height="9" fill="#fff" stroke="#000"/><path d="M645 77 h10 v9 z" fill="#000"/>
<text x="659.5" y="85" font-family="Liberation Sans" font-size="12.2" font-weight="normal" fill="#000" textLength="33" lengthAdjust="spacingAndGlyphs" >Белый</text>
<rect x="795" y="70" width="160" height="22" fill="#7f9db9" />
<rect x="796" y="71" width="158" height="20" fill="#fff" />
<rect x="938" y="72" width="15" height="18" rx="2" fill="url(#gBtn)"/>
<path d="M941.5 79.0 L945.5 83.0 L949.5 79.0" stroke="#4d6185" stroke-width="2.2" fill="none" stroke-linecap="square"/>
<rect x="800" y="81" width="60" height="1" fill="#000" />
<text x="865.5" y="85" font-family="Liberation Sans" font-size="12.2" font-weight="normal" fill="#000" textLength="39.5" lengthAdjust="spacingAndGlyphs" >Послою</text>
<rect x="961" y="70" width="125" height="22" fill="#7f9db9" />
<rect x="962" y="71" width="123" height="20" fill="#fff" />
<rect x="1069" y="72" width="15" height="18" rx="2" fill="url(#gBtn)"/>
<path d="M1072.5 79.0 L1076.5 83.0 L1080.5 79.0" stroke="#4d6185" stroke-width="2.2" fill="none" stroke-linecap="square"/>
<rect x="966" y="79" width="35" height="4" fill="#000" />
<text x="1006" y="85" font-family="Liberation Sans" font-size="12.2" font-weight="normal" fill="#000" textLength="40" lengthAdjust="spacingAndGlyphs" >0.40 мм</text>
<rect x="1092" y="70" width="120" height="22" fill="#c9c7ba" />
<rect x="1093" y="71" width="118" height="20" fill="#ece9d8" />
<rect x="1195" y="72" width="15" height="18" rx="2" fill="#f4f3ee"/>
<path d="M1198.5 79.0 L1202.5 83.0 L1206.5 79.0" stroke="#c9c7ba" stroke-width="2.2" fill="none" stroke-linecap="square"/>
<text x="1102.5" y="85" font-family="Liberation Sans" font-size="12.2" font-weight="normal" fill="#aca899" textLength="42" lengthAdjust="spacingAndGlyphs" >Поцвету</text>
<rect x="0" y="95" width="1228" height="1" fill="#aca899" />
<rect x="0" y="95" width="2" height="814" fill="#b3af9c" />
<rect x="1226" y="95" width="2" height="814" fill="#fff" />
<rect x="2" y="96" width="1224" height="797" fill="#000" />
<rect x="338" y="160" width="93" height="1" fill="#fff" />
<rect x="338" y="160" width="1" height="37" fill="#fff" />
<rect x="338" y="168" width="28" height="1" fill="#fff" />
<rect x="338" y="171" width="11" height="1" fill="#fff" />
<rect x="338" y="175" width="11" height="1" fill="#fff" />
<rect x="338" y="179" width="11" height="1" fill="#fff" />
<rect x="338" y="183" width="11" height="1" fill="#fff" />
<rect x="338" y="187" width="11" height="1" fill="#fff" />
<rect x="338" y="191" width="11" height="1" fill="#fff" />
<rect x="338" y="195" width="11" height="1" fill="#fff" />
<rect x="338" y="196" width="11" height="1" fill="#fff" />
<rect x="349" y="168" width="1" height="29" fill="#fff" />
<rect x="348" y="168" width="1" height="666" fill="#fff" />
<rect x="357" y="168" width="1" height="666" fill="#fff" />
<rect x="365" y="160" width="1" height="674" fill="#fff" />
<rect x="430" y="160" width="1" height="171" fill="#fff" />
<rect x="365" y="330" width="66" height="1" fill="#fff" />
<rect x="365" y="163" width="62" height="1" fill="#fff" />
<rect x="426" y="163" width="1" height="163" fill="#fff" />
<rect x="365" y="325" width="62" height="1" fill="#fff" />
<rect x="338" y="799" width="1" height="35" fill="#fff" />
<rect x="343" y="793" width="6" height="1" fill="#fff" />
<rect x="340" y="797" width="9" height="1" fill="#fff" />
<rect x="338" y="801" width="11" height="1" fill="#fff" />
<rect x="338" y="805" width="11" height="1" fill="#fff" />
<rect x="338" y="809" width="11" height="1" fill="#fff" />
<rect x="338" y="813" width="11" height="1" fill="#fff" />
<rect x="338" y="817" width="11" height="1" fill="#fff" />
<rect x="338" y="821" width="11" height="1" fill="#fff" />
<rect x="338" y="825" width="11" height="1" fill="#fff" />
<rect x="338" y="829" width="11" height="1" fill="#fff" />
<rect x="326" y="833" width="763" height="1" fill="#fff" />
<rect x="983" y="160" width="94" height="1" fill="#fff" />
<rect x="1076" y="160" width="1" height="37" fill="#fff" />
<rect x="1048" y="168" width="29" height="1" fill="#fff" />
<rect x="1066" y="171" width="11" height="1" fill="#fff" />
<rect x="1066" y="175" width="11" height="1" fill="#fff" />
<rect x="1066" y="179" width="11" height="1" fill="#fff" />
<rect x="1066" y="183" width="11" height="1" fill="#fff" />
<rect x="1066" y="187" width="11" height="1" fill="#fff" />
<rect x="1066" y="191" width="11" height="1" fill="#fff" />
<rect x="1066" y="195" width="11" height="1" fill="#fff" />
<rect x="1066" y="196" width="11" height="1" fill="#fff" />
<rect x="1048" y="160" width="1" height="674" fill="#fff" />
<rect x="1057" y="168" width="1" height="666" fill="#fff" />
<rect x="1066" y="168" width="1" height="666" fill="#fff" />
<rect x="983" y="160" width="1" height="171" fill="#fff" />
<rect x="983" y="330" width="66" height="1" fill="#fff" />
<rect x="987" y="163" width="1" height="163" fill="#fff" />
<rect x="987" y="163" width="62" height="1" fill="#fff" />
<rect x="987" y="325" width="62" height="1" fill="#fff" />
<rect x="1076" y="799" width="1" height="35" fill="#fff" />
<rect x="1066" y="793" width="6" height="1" fill="#fff" />
<rect x="1066" y="797" width="9" height="1" fill="#fff" />
<rect x="1066" y="801" width="11" height="1" fill="#fff" />
<rect x="1066" y="805" width="11" height="1" fill="#fff" />
<rect x="1066" y="809" width="11" height="1" fill="#fff" />
<rect x="1066" y="813" width="11" height="1" fill="#fff" />
<rect x="1066" y="817" width="11" height="1" fill="#fff" />
<rect x="1066" y="821" width="11" height="1" fill="#fff" />
<rect x="1066" y="825" width="11" height="1" fill="#fff" />
<rect x="1066" y="829" width="11" height="1" fill="#fff" />
<rect x="17" y="859" width="17" height="1" fill="#fff" />
<rect x="17" y="874" width="17" height="1" fill="#fff" />
<rect x="17" y="859" width="1" height="16" fill="#fff" />
<rect x="33" y="859" width="1" height="16" fill="#fff" />
<rect x="25" y="790" width="1" height="69" fill="#fff" />
<rect x="18" y="790" width="15" height="1" fill="#fff" />
<rect x="34" y="866" width="68" height="1" fill="#fff" />
<rect x="101" y="860" width="1" height="14" fill="#fff" />
<rect x="27" y="748" width="1" height="10" fill="#fff" />
<path d="M24.5 777v12M26.5 777v12M104 863.5h14M104 868.5h14" stroke="#7a7a7a" stroke-width="1" fill="none"/>
<path d="M354 160h1v1h-1zM1060 160h1v1h-1zM1072 160h1v1h-1zM343 161h1v1h-1zM353 161h1v1h-1zM365 161h1v1h-1zM1059 161h1v1h-1zM1071 161h1v1h-1zM342 162h1v1h-1zM352 162h1v1h-1zM364 162h1v1h-1zM1058 162h1v1h-1zM1070 162h1v1h-1zM341 163h1v1h-1zM351 163h1v1h-1zM363 163h1v1h-1zM1057 163h1v1h-1zM1069 163h1v1h-1zM340 164h1v1h-1zM350 164h1v1h-1zM362 164h1v1h-1zM1056 164h1v1h-1zM1068 164h1v1h-1zM339 165h1v1h-1zM349 165h1v1h-1zM361 165h1v1h-1zM1055 165h1v1h-1zM1067 165h1v1h-1zM348 166h1v1h-1zM360 166h1v1h-1zM1054 166h1v1h-1zM1066 166h1v1h-1zM347 167h1v1h-1zM359 167h1v1h-1zM1053 167h1v1h-1zM1065 167h1v1h-1zM346 168h1v1h-1zM358 168h1v1h-1zM1052 168h1v1h-1zM1064 168h1v1h-1zM355 169h1v1h-1zM1053 169h1v1h-1zM356 170h1v1h-1zM1054 170h1v1h-1zM357 171h1v1h-1zM1055 171h1v1h-1zM358 172h1v1h-1zM1056 172h1v1h-1zM359 173h1v1h-1zM1057 173h1v1h-1zM360 174h1v1h-1zM1058 174h1v1h-1zM361 175h1v1h-1zM1059 175h1v1h-1zM362 176h1v1h-1zM1060 176h1v1h-1zM363 177h1v1h-1zM1061 177h1v1h-1zM364 178h1v1h-1zM1062 178h1v1h-1zM365 179h1v1h-1zM1063 179h1v1h-1zM1064 180h1v1h-1zM1065 181h1v1h-1zM1066 182h1v1h-1zM348 186h1v1h-1zM349 187h1v1h-1zM1048 187h1v1h-1zM350 188h1v1h-1zM1049 188h1v1h-1zM351 189h1v1h-1zM1050 189h1v1h-1zM352 190h1v1h-1zM1051 190h1v1h-1zM353 191h1v1h-1zM1052 191h1v1h-1zM354 192h1v1h-1zM1053 192h1v1h-1zM355 193h1v1h-1zM1054 193h1v1h-1zM356 194h1v1h-1zM1055 194h1v1h-1zM357 195h1v1h-1zM1056 195h1v1h-1zM358 196h1v1h-1zM1057 196h1v1h-1zM359 197h1v1h-1zM1058 197h1v1h-1zM360 198h1v1h-1zM1059 198h1v1h-1zM361 199h1v1h-1zM1060 199h1v1h-1zM362 200h1v1h-1zM1061 200h1v1h-1zM363 201h1v1h-1zM1062 201h1v1h-1zM364 202h1v1h-1zM1063 202h1v1h-1zM365 203h1v1h-1zM1064 203h1v1h-1zM1065 204h1v1h-1zM1066 205h1v1h-1zM348 209h1v1h-1zM349 210h1v1h-1zM1048 210h1v1h-1zM350 211h1v1h-1zM1049 211h1v1h-1zM351 212h1v1h-1zM1050 212h1v1h-1zM352 213h1v1h-1zM1051 213h1v1h-1zM353 214h1v1h-1zM1052 214h1v1h-1zM354 215h1v1h-1zM1053 215h1v1h-1zM355 216h1v1h-1zM1054 216h1v1h-1zM356 217h1v1h-1zM1055 217h1v1h-1zM357 218h1v1h-1zM1056 218h1v1h-1zM358 219h1v1h-1zM1057 219h1v1h-1zM359 220h1v1h-1zM1058 220h1v1h-1zM360 221h1v1h-1zM1059 221h1v1h-1zM361 222h1v1h-1zM1060 222h1v1h-1zM362 223h1v1h-1zM1061 223h1v1h-1zM363 224h1v1h-1zM1062 224h1v1h-1zM364 225h1v1h-1zM1063 225h1v1h-1zM365 226h1v1h-1zM1064 226h1v1h-1zM1065 227h1v1h-1zM1066 228h1v1h-1zM348 232h1v1h-1zM349 233h1v1h-1zM1048 233h1v1h-1zM350 234h1v1h-1zM1049 234h1v1h-1zM351 235h1v1h-1zM1050 235h1v1h-1zM352 236h1v1h-1zM1051 236h1v1h-1zM353 237h1v1h-1zM1052 237h1v1h-1zM354 238h1v1h-1zM1053 238h1v1h-1zM355 239h1v1h-1zM1054 239h1v1h-1zM356 240h1v1h-1zM1055 240h1v1h-1zM357 241h1v1h-1zM1056 241h1v1h-1zM358 242h1v1h-1zM1057 242h1v1h-1zM359 243h1v1h-1zM1058 243h1v1h-1zM360 244h1v1h-1zM1059 244h1v1h-1zM361 245h1v1h-1zM1060 245h1v1h-1zM362 246h1v1h-1zM1061 246h1v1h-1zM363 247h1v1h-1zM1062 247h1v1h-1zM364 248h1v1h-1zM1063 248h1v1h-1zM365 249h1v1h-1zM1064 249h1v1h-1zM1065 250h1v1h-1zM1066 251h1v1h-1zM348 255h1v1h-1zM349 256h1v1h-1zM1048 256h1v1h-1zM350 257h1v1h-1zM1049 257h1v1h-1zM351 258h1v1h-1zM1050 258h1v1h-1zM352 259h1v1h-1zM1051 259h1v1h-1zM353 260h1v1h-1zM1052 260h1v1h-1zM354 261h1v1h-1zM1053 261h1v1h-1zM355 262h1v1h-1zM1054 262h1v1h-1zM356 263h1v1h-1zM1055 263h1v1h-1zM357 264h1v1h-1zM1056 264h1v1h-1zM358 265h1v1h-1zM1057 265h1v1h-1zM359 266h1v1h-1zM1058 266h1v1h-1zM360 267h1v1h-1zM1059 267h1v1h-1zM361 268h1v1h-1zM1060 268h1v1h-1zM362 269h1v1h-1zM1061 269h1v1h-1zM363 270h1v1h-1zM1062 270h1v1h-1zM364 271h1v1h-1zM1063 271h1v1h-1zM365 272h1v1h-1zM1064 272h1v1h-1zM1065 273h1v1h-1zM1066 274h1v1h-1zM348 278h1v1h-1zM349 279h1v1h-1zM350 280h1v1h-1zM1048 280h1v1h-1zM351 281h1v1h-1zM1049 281h1v1h-1zM352 282h1v1h-1zM1050 282h1v1h-1zM353 283h1v1h-1zM1051 283h1v1h-1zM354 284h1v1h-1zM1052 284h1v1h-1zM355 285h1v1h-1zM1053 285h1v1h-1zM356 286h1v1h-1zM1054 286h1v1h-1zM357 287h1v1h-1zM1055 287h1v1h-1zM358 288h1v1h-1zM1056 288h1v1h-1zM359 289h1v1h-1zM1057 289h1v1h-1zM360 290h1v1h-1zM1058 290h1v1h-1zM361 291h1v1h-1zM1059 291h1v1h-1zM362 292h1v1h-1zM1060 292h1v1h-1zM363 293h1v1h-1zM1061 293h1v1h-1zM364 294h1v1h-1zM1062 294h1v1h-1zM365 295h1v1h-1zM1063 295h1v1h-1zM1064 296h1v1h-1zM1065 297h1v1h-1zM1066 298h1v1h-1zM348 301h1v1h-1zM349 302h1v1h-1zM350 303h1v1h-1zM1048 303h1v1h-1zM351 304h1v1h-1zM1049 304h1v1h-1zM352 305h1v1h-1zM1050 305h1v1h-1zM353 306h1v1h-1zM1051 306h1v1h-1zM354 307h1v1h-1zM1052 307h1v1h-1zM355 308h1v1h-1zM1053 308h1v1h-1zM356 309h1v1h-1zM1054 309h1v1h-1zM357 310h1v1h-1zM1055 310h1v1h-1zM358 311h1v1h-1zM1056 311h1v1h-1zM359 312h1v1h-1zM1057 312h1v1h-1zM360 313h1v1h-1zM1058 313h1v1h-1zM361 314h1v1h-1zM1059 314h1v1h-1zM362 315h1v1h-1zM1060 315h1v1h-1zM363 316h1v1h-1zM1061 316h1v1h-1zM364 317h1v1h-1zM1062 317h1v1h-1zM365 318h1v1h-1zM1063 318h1v1h-1zM1064 319h1v1h-1zM1065 320h1v1h-1zM1066 321h1v1h-1zM348 325h1v1h-1zM349 326h1v1h-1zM1048 326h1v1h-1zM350 327h1v1h-1zM1049 327h1v1h-1zM351 328h1v1h-1zM1050 328h1v1h-1zM352 329h1v1h-1zM1051 329h1v1h-1zM353 330h1v1h-1zM1052 330h1v1h-1zM354 331h1v1h-1zM1053 331h1v1h-1zM355 332h1v1h-1zM1054 332h1v1h-1zM356 333h1v1h-1zM1055 333h1v1h-1zM357 334h1v1h-1zM1056 334h1v1h-1zM358 335h1v1h-1zM1057 335h1v1h-1zM359 336h1v1h-1zM1058 336h1v1h-1zM360 337h1v1h-1zM1059 337h1v1h-1zM361 338h1v1h-1zM1060 338h1v1h-1zM362 339h1v1h-1zM1061 339h1v1h-1zM363 340h1v1h-1zM1062 340h1v1h-1zM364 341h1v1h-1zM1063 341h1v1h-1zM365 342h1v1h-1zM1064 342h1v1h-1zM1065 343h1v1h-1zM1066 344h1v1h-1zM348 348h1v1h-1zM349 349h1v1h-1zM1048 349h1v1h-1zM350 350h1v1h-1zM1049 350h1v1h-1zM351 351h1v1h-1zM1050 351h1v1h-1zM352 352h1v1h-1zM1051 352h1v1h-1zM353 353h1v1h-1zM1052 353h1v1h-1zM354 354h1v1h-1zM1053 354h1v1h-1zM355 355h1v1h-1zM1054 355h1v1h-1zM356 356h1v1h-1zM1055 356h1v1h-1zM357 357h1v1h-1zM1056 357h1v1h-1zM358 358h1v1h-1zM1057 358h1v1h-1zM359 359h1v1h-1zM1058 359h1v1h-1zM360 360h1v1h-1zM1059 360h1v1h-1zM361 361h1v1h-1zM1060 361h1v1h-1zM362 362h1v1h-1zM1061 362h1v1h-1zM363 363h1v1h-1zM1062 363h1v1h-1zM364 364h1v1h-1zM1063 364h1v1h-1zM365 365h1v1h-1zM1064 365h1v1h-1zM1065 366h1v1h-1zM1066 367h1v1h-1zM348 371h1v1h-1zM349 372h1v1h-1zM1048 372h1v1h-1zM350 373h1v1h-1zM430 373h1v1h-1zM986 373h1v1h-1zM1049 373h1v1h-1zM351 374h1v1h-1zM430 374h1v1h-1zM986 374h1v1h-1zM1050 374h1v1h-1zM352 375h1v1h-1zM430 375h1v1h-1zM986 375h1v1h-1zM1051 375h1v1h-1zM353 376h1v1h-1zM430 376h1v1h-1zM986 376h1v1h-1zM1052 376h1v1h-1zM354 377h1v1h-1zM430 377h1v1h-1zM986 377h1v1h-1zM1053 377h1v1h-1zM355 378h1v1h-1zM431 378h1v1h-1zM985 378h1v1h-1zM1054 378h1v1h-1zM356 379h1v1h-1zM431 379h1v1h-1zM985 379h1v1h-1zM1055 379h1v1h-1zM357 380h1v1h-1zM431 380h1v1h-1zM985 380h1v1h-1zM1056 380h1v1h-1zM358 381h1v1h-1zM431 381h1v1h-1zM985 381h1v1h-1zM1057 381h1v1h-1zM359 382h1v1h-1zM431 382h1v1h-1zM985 382h1v1h-1zM1058 382h1v1h-1zM360 383h1v1h-1zM431 383h1v1h-1zM985 383h1v1h-1zM1059 383h1v1h-1zM361 384h1v1h-1zM431 384h1v1h-1zM985 384h1v1h-1zM1060 384h1v1h-1zM362 385h1v1h-1zM431 385h1v1h-1zM985 385h1v1h-1zM1061 385h1v1h-1zM363 386h1v1h-1zM431 386h1v1h-1zM985 386h1v1h-1zM1062 386h1v1h-1zM364 387h1v1h-1zM431 387h1v1h-1zM985 387h1v1h-1zM1063 387h1v1h-1zM365 388h1v1h-1zM431 388h1v1h-1zM985 388h1v1h-1zM1064 388h1v1h-1zM431 389h1v1h-1zM985 389h1v1h-1zM1065 389h1v1h-1zM431 390h1v1h-1zM985 390h1v1h-1zM1066 390h1v1h-1zM431 391h1v1h-1zM985 391h1v1h-1zM431 392h1v1h-1zM985 392h1v1h-1zM431 393h1v1h-1zM985 393h1v1h-1zM348 394h1v1h-1zM431 394h1v1h-1zM985 394h1v1h-1zM349 395h1v1h-1zM431 395h1v1h-1zM985 395h1v1h-1zM1048 395h1v1h-1zM350 396h1v1h-1zM432 396h1v1h-1zM984 396h1v1h-1zM1049 396h1v1h-1zM351 397h1v1h-1zM432 397h1v1h-1zM984 397h1v1h-1zM1050 397h1v1h-1zM352 398h1v1h-1zM432 398h1v1h-1zM984 398h1v1h-1zM1051 398h1v1h-1zM353 399h1v1h-1zM432 399h1v1h-1zM984 399h1v1h-1zM1052 399h1v1h-1zM354 400h1v1h-1zM432 400h1v1h-1zM984 400h1v1h-1zM1053 400h1v1h-1zM355 401h1v1h-1zM432 401h1v1h-1zM984 401h1v1h-1zM1054 401h1v1h-1zM356 402h1v1h-1zM432 402h1v1h-1zM984 402h1v1h-1zM1055 402h1v1h-1zM357 403h1v1h-1zM432 403h1v1h-1zM984 403h1v1h-1zM1056 403h1v1h-1zM358 404h1v1h-1zM432 404h1v1h-1zM984 404h1v1h-1zM1057 404h1v1h-1zM359 405h1v1h-1zM433 405h1v1h-1zM983 405h1v1h-1zM1058 405h1v1h-1zM360 406h1v1h-1zM433 406h1v1h-1zM983 406h1v1h-1zM1059 406h1v1h-1zM361 407h1v1h-1zM433 407h1v1h-1zM983 407h1v1h-1zM1060 407h1v1h-1zM362 408h1v1h-1zM433 408h1v1h-1zM983 408h1v1h-1zM1061 408h1v1h-1zM363 409h1v1h-1zM433 409h1v1h-1zM983 409h1v1h-1zM1062 409h1v1h-1zM364 410h1v1h-1zM433 410h1v1h-1zM983 410h1v1h-1zM1063 410h1v1h-1zM365 411h1v1h-1zM433 411h1v1h-1zM983 411h1v1h-1zM1064 411h1v1h-1zM434 412h1v1h-1zM982 412h1v1h-1zM1065 412h1v1h-1zM434 413h1v1h-1zM982 413h1v1h-1zM1066 413h1v1h-1zM434 414h1v1h-1zM982 414h1v1h-1zM434 415h1v1h-1zM982 415h1v1h-1zM434 416h1v1h-1zM982 416h1v1h-1zM348 417h1v1h-1zM434 417h1v1h-1zM982 417h1v1h-1zM349 418h1v1h-1zM434 418h1v1h-1zM982 418h1v1h-1zM1048 418h1v1h-1zM350 419h1v1h-1zM435 419h1v1h-1zM981 419h1v1h-1zM1049 419h1v1h-1zM351 420h1v1h-1zM435 420h1v1h-1zM981 420h1v1h-1zM1050 420h1v1h-1zM352 421h1v1h-1zM435 421h1v1h-1zM981 421h1v1h-1zM1051 421h1v1h-1zM353 422h1v1h-1zM435 422h1v1h-1zM981 422h1v1h-1zM1052 422h1v1h-1zM354 423h1v1h-1zM435 423h1v1h-1zM981 423h1v1h-1zM1053 423h1v1h-1zM355 424h1v1h-1zM436 424h1v1h-1zM980 424h1v1h-1zM1054 424h1v1h-1zM356 425h1v1h-1zM436 425h1v1h-1zM980 425h1v1h-1zM1055 425h1v1h-1zM357 426h1v1h-1zM436 426h1v1h-1zM980 426h1v1h-1zM1056 426h1v1h-1zM358 427h1v1h-1zM436 427h1v1h-1zM980 427h1v1h-1zM1057 427h1v1h-1zM359 428h1v1h-1zM436 428h1v1h-1zM980 428h1v1h-1zM1058 428h1v1h-1zM360 429h1v1h-1zM437 429h1v1h-1zM979 429h1v1h-1zM1059 429h1v1h-1zM361 430h1v1h-1zM437 430h1v1h-1zM979 430h1v1h-1zM1060 430h1v1h-1zM362 431h1v1h-1zM437 431h1v1h-1zM979 431h1v1h-1zM1061 431h1v1h-1zM363 432h1v1h-1zM437 432h1v1h-1zM979 432h1v1h-1zM1062 432h1v1h-1zM364 433h1v1h-1zM438 433h1v1h-1zM978 433h1v1h-1zM1063 433h1v1h-1zM365 434h1v1h-1zM438 434h1v1h-1zM978 434h1v1h-1zM1064 434h1v1h-1zM438 435h1v1h-1zM978 435h1v1h-1zM1065 435h1v1h-1zM438 436h1v1h-1zM978 436h1v1h-1zM1066 436h1v1h-1zM438 437h1v1h-1zM978 437h1v1h-1zM439 438h1v1h-1zM977 438h1v1h-1zM439 439h1v1h-1zM977 439h1v1h-1zM348 440h1v1h-1zM439 440h1v1h-1zM977 440h1v1h-1zM349 441h1v1h-1zM440 441h1v1h-1zM976 441h1v1h-1zM1048 441h1v1h-1zM350 442h1v1h-1zM440 442h1v1h-1zM976 442h1v1h-1zM1049 442h1v1h-1zM351 443h1v1h-1zM440 443h1v1h-1zM976 443h1v1h-1zM1050 443h1v1h-1zM352 444h1v1h-1zM440 444h1v1h-1zM976 444h1v1h-1zM1051 444h1v1h-1zM353 445h1v1h-1zM441 445h1v1h-1zM975 445h1v1h-1zM1052 445h1v1h-1zM354 446h1v1h-1zM441 446h1v1h-1zM975 446h1v1h-1zM1053 446h1v1h-1zM355 447h1v1h-1zM441 447h1v1h-1zM975 447h1v1h-1zM1054 447h1v1h-1zM356 448h1v1h-1zM441 448h1v1h-1zM975 448h1v1h-1zM1055 448h1v1h-1zM357 449h1v1h-1zM442 449h1v1h-1zM974 449h1v1h-1zM1056 449h1v1h-1zM358 450h1v1h-1zM442 450h1v1h-1zM974 450h1v1h-1zM1057 450h1v1h-1zM359 451h1v1h-1zM442 451h1v1h-1zM974 451h1v1h-1zM1058 451h1v1h-1zM360 452h1v1h-1zM443 452h1v1h-1zM973 452h1v1h-1zM1059 452h1v1h-1zM361 453h1v1h-1zM443 453h1v1h-1zM973 453h1v1h-1zM1060 453h1v1h-1zM362 454h1v1h-1zM443 454h1v1h-1zM973 454h1v1h-1zM1061 454h1v1h-1zM363 455h1v1h-1zM444 455h1v1h-1zM972 455h1v1h-1zM1062 455h1v1h-1zM364 456h1v1h-1zM444 456h1v1h-1zM972 456h1v1h-1zM1063 456h1v1h-1zM365 457h1v1h-1zM444 457h1v1h-1zM972 457h1v1h-1zM1064 457h1v1h-1zM445 458h1v1h-1zM971 458h1v1h-1zM1065 458h1v1h-1zM445 459h1v1h-1zM971 459h1v1h-1zM1066 459h1v1h-1zM445 460h1v1h-1zM971 460h1v1h-1zM446 461h1v1h-1zM970 461h1v1h-1zM446 462h1v1h-1zM970 462h1v1h-1zM446 463h1v1h-1zM970 463h1v1h-1zM348 464h1v1h-1zM447 464h1v1h-1zM969 464h1v1h-1zM349 465h1v1h-1zM447 465h1v1h-1zM969 465h1v1h-1zM1048 465h1v1h-1zM350 466h1v1h-1zM447 466h1v1h-1zM969 466h1v1h-1zM1049 466h1v1h-1zM351 467h1v1h-1zM448 467h1v1h-1zM968 467h1v1h-1zM1050 467h1v1h-1zM352 468h1v1h-1zM448 468h1v1h-1zM968 468h1v1h-1zM1051 468h1v1h-1zM353 469h1v1h-1zM448 469h1v1h-1zM968 469h1v1h-1zM1052 469h1v1h-1zM354 470h1v1h-1zM449 470h1v1h-1zM967 470h1v1h-1zM1053 470h1v1h-1zM355 471h1v1h-1zM449 471h1v1h-1zM967 471h1v1h-1zM1054 471h1v1h-1zM356 472h1v1h-1zM450 472h1v1h-1zM966 472h1v1h-1zM1055 472h1v1h-1zM357 473h1v1h-1zM450 473h1v1h-1zM966 473h1v1h-1zM1056 473h1v1h-1zM358 474h1v1h-1zM450 474h1v1h-1zM966 474h1v1h-1zM1057 474h1v1h-1zM359 475h1v1h-1zM451 475h1v1h-1zM965 475h1v1h-1zM1058 475h1v1h-1zM360 476h1v1h-1zM451 476h1v1h-1zM965 476h1v1h-1zM1059 476h1v1h-1zM361 477h1v1h-1zM452 477h1v1h-1zM964 477h1v1h-1zM1060 477h1v1h-1zM362 478h1v1h-1zM452 478h1v1h-1zM964 478h1v1h-1zM1061 478h1v1h-1zM363 479h1v1h-1zM452 479h1v1h-1zM964 479h1v1h-1zM1062 479h1v1h-1zM364 480h1v1h-1zM453 480h1v1h-1zM963 480h1v1h-1zM1063 480h1v1h-1zM365 481h1v1h-1zM453 481h1v1h-1zM963 481h1v1h-1zM1064 481h1v1h-1zM454 482h1v1h-1zM962 482h1v1h-1zM1065 482h1v1h-1zM454 483h1v1h-1zM962 483h1v1h-1zM1066 483h1v1h-1zM455 484h1v1h-1zM961 484h1v1h-1zM455 485h1v1h-1zM961 485h1v1h-1zM456 486h1v1h-1zM960 486h1v1h-1zM348 487h1v1h-1zM456 487h1v1h-1zM960 487h1v1h-1zM349 488h1v1h-1zM456 488h1v1h-1zM960 488h1v1h-1zM1048 488h1v1h-1zM350 489h1v1h-1zM457 489h1v1h-1zM959 489h1v1h-1zM1049 489h1v1h-1zM351 490h1v1h-1zM457 490h1v1h-1zM959 490h1v1h-1zM1050 490h1v1h-1zM352 491h1v1h-1zM458 491h1v1h-1zM958 491h1v1h-1zM1051 491h1v1h-1zM353 492h1v1h-1zM458 492h1v1h-1zM958 492h1v1h-1zM1052 492h1v1h-1zM354 493h1v1h-1zM459 493h1v1h-1zM957 493h1v1h-1zM1053 493h1v1h-1zM355 494h1v1h-1zM459 494h1v1h-1zM957 494h1v1h-1zM1054 494h1v1h-1zM356 495h1v1h-1zM460 495h1v1h-1zM956 495h1v1h-1zM1055 495h1v1h-1zM357 496h1v1h-1zM460 496h1v1h-1zM956 496h1v1h-1zM1056 496h1v1h-1zM358 497h1v1h-1zM461 497h1v1h-1zM955 497h1v1h-1zM1057 497h1v1h-1zM359 498h1v1h-1zM461 498h1v1h-1zM955 498h1v1h-1zM1058 498h1v1h-1zM360 499h1v1h-1zM462 499h1v1h-1zM954 499h1v1h-1zM1059 499h1v1h-1zM361 500h1v1h-1zM462 500h1v1h-1zM954 500h1v1h-1zM1060 500h1v1h-1zM362 501h1v1h-1zM463 501h1v1h-1zM953 501h1v1h-1zM1061 501h1v1h-1zM363 502h1v1h-1zM464 502h1v1h-1zM952 502h1v1h-1zM1062 502h1v1h-1zM364 503h1v1h-1zM464 503h1v1h-1zM952 503h1v1h-1zM1063 503h1v1h-1zM365 504h1v1h-1zM465 504h1v1h-1zM951 504h1v1h-1zM1064 504h1v1h-1zM465 505h1v1h-1zM951 505h1v1h-1zM1065 505h1v1h-1zM466 506h1v1h-1zM950 506h1v1h-1zM1066 506h1v1h-1zM466 507h1v1h-1zM950 507h1v1h-1zM467 508h1v1h-1zM949 508h1v1h-1zM467 509h1v1h-1zM949 509h1v1h-1zM348 510h1v1h-1zM468 510h1v1h-1zM948 510h1v1h-1zM349 511h1v1h-1zM469 511h1v1h-1zM947 511h1v1h-1zM1048 511h1v1h-1zM350 512h1v1h-1zM469 512h1v1h-1zM947 512h1v1h-1zM1049 512h1v1h-1zM351 513h1v1h-1zM470 513h1v1h-1zM946 513h1v1h-1zM1050 513h1v1h-1zM352 514h1v1h-1zM470 514h1v1h-1zM946 514h1v1h-1zM1051 514h1v1h-1zM353 515h1v1h-1zM471 515h1v1h-1zM945 515h1v1h-1zM1052 515h1v1h-1zM354 516h1v1h-1zM472 516h1v1h-1zM944 516h1v1h-1zM1053 516h1v1h-1zM355 517h1v1h-1zM472 517h1v1h-1zM944 517h1v1h-1zM1054 517h1v1h-1zM356 518h1v1h-1zM473 518h1v1h-1zM943 518h1v1h-1zM1055 518h1v1h-1zM357 519h1v1h-1zM473 519h1v1h-1zM943 519h1v1h-1zM1056 519h1v1h-1zM358 520h1v1h-1zM474 520h1v1h-1zM942 520h1v1h-1zM1057 520h1v1h-1zM359 521h1v1h-1zM475 521h1v1h-1zM941 521h1v1h-1zM1058 521h1v1h-1zM360 522h1v1h-1zM475 522h1v1h-1zM941 522h1v1h-1zM1059 522h1v1h-1zM361 523h1v1h-1zM476 523h1v1h-1zM940 523h1v1h-1zM1060 523h1v1h-1zM362 524h1v1h-1zM477 524h1v1h-1zM939 524h1v1h-1zM1061 524h1v1h-1zM363 525h1v1h-1zM477 525h1v1h-1zM939 525h1v1h-1zM1062 525h1v1h-1zM364 526h1v1h-1zM478 526h1v1h-1zM938 526h1v1h-1zM1063 526h1v1h-1zM365 527h1v1h-1zM479 527h1v1h-1zM937 527h1v1h-1zM1064 527h1v1h-1zM479 528h1v1h-1zM937 528h1v1h-1zM1065 528h1v1h-1zM480 529h1v1h-1zM936 529h1v1h-1zM1066 529h1v1h-1zM481 530h1v1h-1zM935 530h1v1h-1zM482 531h1v1h-1zM934 531h1v1h-1zM482 532h1v1h-1zM934 532h1v1h-1zM348 533h1v1h-1zM483 533h1v1h-1zM933 533h1v1h-1zM349 534h1v1h-1zM484 534h1v1h-1zM932 534h1v1h-1zM1048 534h1v1h-1zM350 535h1v1h-1zM484 535h1v1h-1zM932 535h1v1h-1zM1049 535h1v1h-1zM351 536h1v1h-1zM485 536h1v1h-1zM931 536h1v1h-1zM1050 536h1v1h-1zM352 537h1v1h-1zM486 537h1v1h-1zM930 537h1v1h-1zM1051 537h1v1h-1zM353 538h1v1h-1zM487 538h1v1h-1zM929 538h1v1h-1zM1052 538h1v1h-1zM354 539h1v1h-1zM487 539h1v1h-1zM929 539h1v1h-1zM1053 539h1v1h-1zM355 540h1v1h-1zM488 540h1v1h-1zM928 540h1v1h-1zM1054 540h1v1h-1zM356 541h1v1h-1zM489 541h1v1h-1zM927 541h1v1h-1zM1055 541h1v1h-1zM357 542h1v1h-1zM490 542h1v1h-1zM926 542h1v1h-1zM1056 542h1v1h-1zM358 543h1v1h-1zM491 543h1v1h-1zM925 543h1v1h-1zM1057 543h1v1h-1zM359 544h1v1h-1zM491 544h1v1h-1zM925 544h1v1h-1zM1058 544h1v1h-1zM360 545h1v1h-1zM492 545h1v1h-1zM924 545h1v1h-1zM1059 545h1v1h-1zM361 546h1v1h-1zM493 546h1v1h-1zM923 546h1v1h-1zM1060 546h1v1h-1zM362 547h1v1h-1zM494 547h1v1h-1zM922 547h1v1h-1zM1061 547h1v1h-1zM363 548h1v1h-1zM495 548h1v1h-1zM921 548h1v1h-1zM1062 548h1v1h-1zM364 549h1v1h-1zM495 549h1v1h-1zM921 549h1v1h-1zM1063 549h1v1h-1zM365 550h1v1h-1zM496 550h1v1h-1zM920 550h1v1h-1zM1064 550h1v1h-1zM497 551h1v1h-1zM919 551h1v1h-1zM1065 551h1v1h-1zM498 552h1v1h-1zM918 552h1v1h-1zM1066 552h1v1h-1zM499 553h1v1h-1zM917 553h1v1h-1zM500 554h1v1h-1zM916 554h1v1h-1zM501 555h1v1h-1zM915 555h1v1h-1zM348 556h1v1h-1zM501 556h1v1h-1zM915 556h1v1h-1zM349 557h1v1h-1zM502 557h1v1h-1zM914 557h1v1h-1zM1048 557h1v1h-1zM350 558h1v1h-1zM503 558h1v1h-1zM913 558h1v1h-1zM1049 558h1v1h-1zM351 559h1v1h-1zM504 559h1v1h-1zM912 559h1v1h-1zM1050 559h1v1h-1zM352 560h1v1h-1zM505 560h1v1h-1zM911 560h1v1h-1zM1051 560h1v1h-1zM353 561h1v1h-1zM506 561h1v1h-1zM910 561h1v1h-1zM1052 561h1v1h-1zM354 562h1v1h-1zM507 562h1v1h-1zM909 562h1v1h-1zM1053 562h1v1h-1zM355 563h1v1h-1zM508 563h1v1h-1zM908 563h1v1h-1zM1054 563h1v1h-1zM356 564h1v1h-1zM509 564h1v1h-1zM907 564h1v1h-1zM1055 564h1v1h-1zM357 565h1v1h-1zM510 565h1v1h-1zM906 565h1v1h-1zM1056 565h1v1h-1zM358 566h1v1h-1zM511 566h1v1h-1zM905 566h1v1h-1zM1057 566h1v1h-1zM359 567h1v1h-1zM512 567h1v1h-1zM904 567h1v1h-1zM1058 567h1v1h-1zM360 568h1v1h-1zM513 568h1v1h-1zM903 568h1v1h-1zM1059 568h1v1h-1zM361 569h1v1h-1zM514 569h1v1h-1zM902 569h1v1h-1zM1060 569h1v1h-1zM362 570h1v1h-1zM515 570h1v1h-1zM901 570h1v1h-1zM1061 570h1v1h-1zM363 571h1v1h-1zM516 571h1v1h-1zM900 571h1v1h-1zM1062 571h1v1h-1zM364 572h1v1h-1zM517 572h1v1h-1zM899 572h1v1h-1zM1063 572h1v1h-1zM365 573h1v1h-1zM518 573h1v1h-1zM898 573h1v1h-1zM1064 573h1v1h-1zM519 574h1v1h-1zM897 574h1v1h-1zM1065 574h1v1h-1zM520 575h1v1h-1zM896 575h1v1h-1zM1066 575h1v1h-1zM521 576h1v1h-1zM895 576h1v1h-1zM522 577h2v1h-2zM893 577h2v1h-2zM524 578h1v1h-1zM892 578h1v1h-1zM348 579h1v1h-1zM525 579h1v1h-1zM891 579h1v1h-1zM349 580h1v1h-1zM526 580h1v1h-1zM890 580h1v1h-1zM1048 580h1v1h-1zM350 581h1v1h-1zM527 581h1v1h-1zM889 581h1v1h-1zM1049 581h1v1h-1zM351 582h1v1h-1zM528 582h1v1h-1zM888 582h1v1h-1zM1050 582h1v1h-1zM352 583h1v1h-1zM529 583h1v1h-1zM887 583h1v1h-1zM1051 583h1v1h-1zM353 584h1v1h-1zM530 584h2v1h-2zM885 584h2v1h-2zM1052 584h1v1h-1zM354 585h1v1h-1zM532 585h1v1h-1zM884 585h1v1h-1zM1053 585h1v1h-1zM355 586h1v1h-1zM533 586h1v1h-1zM883 586h1v1h-1zM1054 586h1v1h-1zM356 587h1v1h-1zM534 587h1v1h-1zM882 587h1v1h-1zM1055 587h1v1h-1zM357 588h1v1h-1zM535 588h2v1h-2zM880 588h2v1h-2zM1056 588h1v1h-1zM358 589h1v1h-1zM537 589h1v1h-1zM879 589h1v1h-1zM1057 589h1v1h-1zM359 590h1v1h-1zM538 590h1v1h-1zM878 590h1v1h-1zM1058 590h1v1h-1zM360 591h1v1h-1zM539 591h2v1h-2zM876 591h2v1h-2zM1059 591h1v1h-1zM361 592h1v1h-1zM541 592h1v1h-1zM875 592h1v1h-1zM1060 592h1v1h-1zM362 593h1v1h-1zM542 593h1v1h-1zM874 593h1v1h-1zM1061 593h1v1h-1zM363 594h1v1h-1zM543 594h2v1h-2zM872 594h2v1h-2zM1062 594h1v1h-1zM364 595h1v1h-1zM545 595h1v1h-1zM871 595h1v1h-1zM1063 595h1v1h-1zM365 596h1v1h-1zM546 596h1v1h-1zM870 596h1v1h-1zM1064 596h1v1h-1zM547 597h2v1h-2zM868 597h2v1h-2zM1065 597h1v1h-1zM549 598h1v1h-1zM867 598h1v1h-1zM1066 598h1v1h-1zM550 599h2v1h-2zM865 599h2v1h-2zM552 600h1v1h-1zM864 600h1v1h-1zM553 601h2v1h-2zM862 601h2v1h-2zM348 602h1v1h-1zM555 602h1v1h-1zM861 602h1v1h-1zM349 603h1v1h-1zM556 603h2v1h-2zM859 603h2v1h-2zM1048 603h1v1h-1zM350 604h1v1h-1zM558 604h1v1h-1zM858 604h1v1h-1zM1049 604h1v1h-1zM351 605h1v1h-1zM559 605h2v1h-2zM856 605h2v1h-2zM1050 605h1v1h-1zM352 606h1v1h-1zM561 606h1v1h-1zM855 606h1v1h-1zM1051 606h1v1h-1zM353 607h1v1h-1zM562 607h2v1h-2zM853 607h2v1h-2zM1052 607h1v1h-1zM354 608h1v1h-1zM564 608h2v1h-2zM851 608h2v1h-2zM1053 608h1v1h-1zM355 609h1v1h-1zM566 609h1v1h-1zM850 609h1v1h-1zM1054 609h1v1h-1zM356 610h1v1h-1zM567 610h2v1h-2zM848 610h2v1h-2zM1055 610h1v1h-1zM357 611h1v1h-1zM569 611h2v1h-2zM846 611h2v1h-2zM1056 611h1v1h-1zM358 612h1v1h-1zM571 612h1v1h-1zM845 612h1v1h-1zM1057 612h1v1h-1zM359 613h1v1h-1zM572 613h2v1h-2zM843 613h2v1h-2zM1058 613h1v1h-1zM360 614h1v1h-1zM574 614h2v1h-2zM841 614h2v1h-2zM1059 614h1v1h-1zM361 615h1v1h-1zM576 615h2v1h-2zM839 615h2v1h-2zM1060 615h1v1h-1zM362 616h1v1h-1zM578 616h2v1h-2zM837 616h2v1h-2zM1061 616h1v1h-1zM363 617h1v1h-1zM580 617h2v1h-2zM835 617h2v1h-2zM1062 617h1v1h-1zM364 618h1v1h-1zM582 618h2v1h-2zM833 618h2v1h-2zM1063 618h1v1h-1zM365 619h1v1h-1zM584 619h2v1h-2zM831 619h2v1h-2zM1064 619h1v1h-1zM586 620h2v1h-2zM829 620h2v1h-2zM1065 620h1v1h-1zM588 621h2v1h-2zM827 621h2v1h-2zM1066 621h1v1h-1zM590 622h2v1h-2zM825 622h2v1h-2zM592 623h2v1h-2zM823 623h2v1h-2zM594 624h2v1h-2zM821 624h2v1h-2zM596 625h3v1h-3zM818 625h3v1h-3zM348 626h1v1h-1zM599 626h2v1h-2zM816 626h2v1h-2zM1048 626h1v1h-1zM349 627h1v1h-1zM601 627h3v1h-3zM813 627h3v1h-3zM1049 627h1v1h-1zM350 628h1v1h-1zM604 628h2v1h-2zM811 628h2v1h-2zM1050 628h1v1h-1zM351 629h1v1h-1zM606 629h3v1h-3zM808 629h3v1h-3zM1051 629h1v1h-1zM352 630h1v1h-1zM609 630h2v1h-2zM806 630h2v1h-2zM1052 630h1v1h-1zM353 631h1v1h-1zM611 631h3v1h-3zM803 631h3v1h-3zM1053 631h1v1h-1zM354 632h1v1h-1zM614 632h3v1h-3zM800 632h3v1h-3zM1054 632h1v1h-1zM355 633h1v1h-1zM617 633h3v1h-3zM797 633h3v1h-3zM1055 633h1v1h-1zM356 634h1v1h-1zM620 634h3v1h-3zM794 634h3v1h-3zM1056 634h1v1h-1zM357 635h1v1h-1zM623 635h3v1h-3zM791 635h3v1h-3zM1057 635h1v1h-1zM358 636h1v1h-1zM626 636h3v1h-3zM788 636h3v1h-3zM1058 636h1v1h-1zM359 637h1v1h-1zM629 637h4v1h-4zM784 637h4v1h-4zM1059 637h1v1h-1zM360 638h1v1h-1zM633 638h3v1h-3zM781 638h3v1h-3zM1060 638h1v1h-1zM361 639h1v1h-1zM636 639h4v1h-4zM777 639h4v1h-4zM1061 639h1v1h-1zM362 640h1v1h-1zM640 640h4v1h-4zM773 640h4v1h-4zM1062 640h1v1h-1zM363 641h1v1h-1zM644 641h4v1h-4zM769 641h4v1h-4zM1063 641h1v1h-1zM364 642h1v1h-1zM648 642h5v1h-5zM764 642h5v1h-5zM1064 642h1v1h-1zM365 643h1v1h-1zM653 643h5v1h-5zM759 643h5v1h-5zM1065 643h1v1h-1zM658 644h6v1h-6zM753 644h6v1h-6zM1066 644h1v1h-1zM664 645h7v1h-7zM746 645h7v1h-7zM671 646h8v1h-8zM738 646h8v1h-8zM679 647h11v1h-11zM727 647h11v1h-11zM690 648h37v1h-37zM348 649h1v1h-1zM349 650h1v1h-1zM1048 650h1v1h-1zM350 651h1v1h-1zM1049 651h1v1h-1zM351 652h1v1h-1zM1050 652h1v1h-1zM352 653h1v1h-1zM1051 653h1v1h-1zM353 654h1v1h-1zM1052 654h1v1h-1zM354 655h1v1h-1zM1053 655h1v1h-1zM355 656h1v1h-1zM1054 656h1v1h-1zM356 657h1v1h-1zM1055 657h1v1h-1zM357 658h1v1h-1zM1056 658h1v1h-1zM358 659h1v1h-1zM1057 659h1v1h-1zM359 660h1v1h-1zM1058 660h1v1h-1zM360 661h1v1h-1zM1059 661h1v1h-1zM361 662h1v1h-1zM1060 662h1v1h-1zM362 663h1v1h-1zM1061 663h1v1h-1zM363 664h1v1h-1zM1062 664h1v1h-1zM364 665h1v1h-1zM1063 665h1v1h-1zM365 666h1v1h-1zM1064 666h1v1h-1zM1065 667h1v1h-1zM1066 668h1v1h-1zM348 672h1v1h-1zM349 673h1v1h-1zM1048 673h1v1h-1zM350 674h1v1h-1zM1049 674h1v1h-1zM351 675h1v1h-1zM1050 675h1v1h-1zM352 676h1v1h-1zM1051 676h1v1h-1zM353 677h1v1h-1zM1052 677h1v1h-1zM354 678h1v1h-1zM1053 678h1v1h-1zM355 679h1v1h-1zM1054 679h1v1h-1zM356 680h1v1h-1zM1055 680h1v1h-1zM357 681h1v1h-1zM1056 681h1v1h-1zM358 682h1v1h-1zM1057 682h1v1h-1zM359 683h1v1h-1zM1058 683h1v1h-1zM360 684h1v1h-1zM1059 684h1v1h-1zM361 685h1v1h-1zM1060 685h1v1h-1zM362 686h1v1h-1zM1061 686h1v1h-1zM363 687h1v1h-1zM1062 687h1v1h-1zM364 688h1v1h-1zM1063 688h1v1h-1zM365 689h1v1h-1zM1064 689h1v1h-1zM1065 690h1v1h-1zM1066 691h1v1h-1zM348 695h1v1h-1zM349 696h1v1h-1zM1048 696h1v1h-1zM350 697h1v1h-1zM1049 697h1v1h-1zM351 698h1v1h-1zM1050 698h1v1h-1zM352 699h1v1h-1zM1051 699h1v1h-1zM353 700h1v1h-1zM1052 700h1v1h-1zM354 701h1v1h-1zM1053 701h1v1h-1zM355 702h1v1h-1zM1054 702h1v1h-1zM356 703h1v1h-1zM1055 703h1v1h-1zM357 704h1v1h-1zM1056 704h1v1h-1zM358 705h1v1h-1zM1057 705h1v1h-1zM359 706h1v1h-1zM1058 706h1v1h-1zM360 707h1v1h-1zM1059 707h1v1h-1zM361 708h1v1h-1zM1060 708h1v1h-1zM362 709h1v1h-1zM1061 709h1v1h-1zM363 710h1v1h-1zM1062 710h1v1h-1zM364 711h1v1h-1zM1063 711h1v1h-1zM365 712h1v1h-1zM1064 712h1v1h-1zM1065 713h1v1h-1zM1066 714h1v1h-1zM348 718h1v1h-1zM349 719h1v1h-1zM1048 719h1v1h-1zM350 720h1v1h-1zM1049 720h1v1h-1zM351 721h1v1h-1zM1050 721h1v1h-1zM352 722h1v1h-1zM1051 722h1v1h-1zM353 723h1v1h-1zM1052 723h1v1h-1zM354 724h1v1h-1zM1053 724h1v1h-1zM355 725h1v1h-1zM1054 725h1v1h-1zM356 726h1v1h-1zM1055 726h1v1h-1zM357 727h1v1h-1zM1056 727h1v1h-1zM358 728h1v1h-1zM1057 728h1v1h-1zM359 729h1v1h-1zM1058 729h1v1h-1zM360 730h1v1h-1zM1059 730h1v1h-1zM361 731h1v1h-1zM1060 731h1v1h-1zM362 732h1v1h-1zM1061 732h1v1h-1zM363 733h1v1h-1zM1062 733h1v1h-1zM364 734h1v1h-1zM1063 734h1v1h-1zM365 735h1v1h-1zM1064 735h1v1h-1zM1065 736h1v1h-1zM20 737h1v1h-1zM34 737h1v1h-1zM1066 737h1v1h-1zM21 738h1v1h-1zM33 738h1v1h-1zM21 739h1v1h-1zM33 739h1v1h-1zM22 740h1v1h-1zM32 740h1v1h-1zM23 741h1v1h-1zM31 741h1v1h-1zM348 741h1v1h-1zM23 742h1v1h-1zM31 742h1v1h-1zM349 742h1v1h-1zM1048 742h1v1h-1zM24 743h1v1h-1zM30 743h1v1h-1zM350 743h1v1h-1zM1049 743h1v1h-1zM25 744h1v1h-1zM29 744h1v1h-1zM351 744h1v1h-1zM1050 744h1v1h-1zM25 745h1v1h-1zM29 745h1v1h-1zM352 745h1v1h-1zM1051 745h1v1h-1zM26 746h1v1h-1zM28 746h1v1h-1zM353 746h1v1h-1zM1052 746h1v1h-1zM354 747h1v1h-1zM1053 747h1v1h-1zM355 748h1v1h-1zM1054 748h1v1h-1zM356 749h1v1h-1zM1055 749h1v1h-1zM357 750h1v1h-1zM1056 750h1v1h-1zM358 751h1v1h-1zM1057 751h1v1h-1zM359 752h1v1h-1zM1058 752h1v1h-1zM360 753h1v1h-1zM1059 753h1v1h-1zM361 754h1v1h-1zM1060 754h1v1h-1zM362 755h1v1h-1zM1061 755h1v1h-1zM363 756h1v1h-1zM1062 756h1v1h-1zM364 757h1v1h-1zM1063 757h1v1h-1zM365 758h1v1h-1zM1064 758h1v1h-1zM1065 759h1v1h-1zM1066 760h1v1h-1zM348 765h1v1h-1zM1048 765h1v1h-1zM349 766h1v1h-1zM1049 766h1v1h-1zM350 767h1v1h-1zM1050 767h1v1h-1zM351 768h1v1h-1zM1051 768h1v1h-1zM352 769h1v1h-1zM1052 769h1v1h-1zM353 770h1v1h-1zM1053 770h1v1h-1zM25 771h1v1h-1zM354 771h1v1h-1zM1054 771h1v1h-1zM25 772h1v1h-1zM355 772h1v1h-1zM1055 772h1v1h-1zM24 773h1v1h-1zM26 773h1v1h-1zM356 773h1v1h-1zM1056 773h1v1h-1zM24 774h1v1h-1zM26 774h1v1h-1zM357 774h1v1h-1zM1057 774h1v1h-1zM23 775h1v1h-1zM27 775h1v1h-1zM358 775h1v1h-1zM1058 775h1v1h-1zM23 776h1v1h-1zM27 776h1v1h-1zM359 776h1v1h-1zM1059 776h1v1h-1zM23 777h1v1h-1zM27 777h1v1h-1zM360 777h1v1h-1zM1060 777h1v1h-1zM22 778h1v1h-1zM28 778h1v1h-1zM361 778h1v1h-1zM1061 778h1v1h-1zM22 779h1v1h-1zM28 779h1v1h-1zM362 779h1v1h-1zM1062 779h1v1h-1zM22 780h1v1h-1zM28 780h1v1h-1zM363 780h1v1h-1zM1063 780h1v1h-1zM21 781h1v1h-1zM29 781h1v1h-1zM364 781h1v1h-1zM1064 781h1v1h-1zM21 782h1v1h-1zM29 782h1v1h-1zM365 782h1v1h-1zM1065 782h1v1h-1zM20 783h1v1h-1zM30 783h1v1h-1zM1066 783h1v1h-1zM20 784h1v1h-1zM30 784h1v1h-1zM20 785h1v1h-1zM30 785h1v1h-1zM19 786h1v1h-1zM31 786h1v1h-1zM19 787h1v1h-1zM31 787h1v1h-1zM18 788h1v1h-1zM32 788h1v1h-1zM348 788h1v1h-1zM1048 788h1v1h-1zM1066 788h1v1h-1zM18 789h1v1h-1zM32 789h1v1h-1zM347 789h1v1h-1zM349 789h1v1h-1zM1049 789h1v1h-1zM1067 789h1v1h-1zM346 790h1v1h-1zM350 790h1v1h-1zM1050 790h1v1h-1zM1068 790h1v1h-1zM345 791h1v1h-1zM351 791h1v1h-1zM1051 791h1v1h-1zM1069 791h1v1h-1zM344 792h1v1h-1zM352 792h1v1h-1zM1052 792h1v1h-1zM1070 792h1v1h-1zM343 793h1v1h-1zM353 793h1v1h-1zM1053 793h1v1h-1zM1071 793h1v1h-1zM343 794h1v1h-1zM354 794h1v1h-1zM1054 794h1v1h-1zM1071 794h1v1h-1zM342 795h1v1h-1zM355 795h1v1h-1zM1055 795h1v1h-1zM1072 795h1v1h-1zM341 796h1v1h-1zM356 796h1v1h-1zM1056 796h1v1h-1zM1073 796h1v1h-1zM340 797h1v1h-1zM357 797h1v1h-1zM1057 797h1v1h-1zM1074 797h1v1h-1zM339 798h1v1h-1zM358 798h1v1h-1zM1058 798h1v1h-1zM1075 798h1v1h-1zM338 799h1v1h-1zM359 799h1v1h-1zM1059 799h1v1h-1zM1076 799h1v1h-1zM360 800h1v1h-1zM1060 800h1v1h-1zM361 801h1v1h-1zM1061 801h1v1h-1zM362 802h1v1h-1zM1062 802h1v1h-1zM363 803h1v1h-1zM1063 803h1v1h-1zM364 804h1v1h-1zM1064 804h1v1h-1zM365 805h1v1h-1zM1065 805h1v1h-1zM1066 806h1v1h-1zM348 811h1v1h-1zM349 812h1v1h-1zM1048 812h1v1h-1zM350 813h1v1h-1zM1049 813h1v1h-1zM351 814h1v1h-1zM1050 814h1v1h-1zM352 815h1v1h-1zM1051 815h1v1h-1zM353 816h1v1h-1zM1052 816h1v1h-1zM354 817h1v1h-1zM1053 817h1v1h-1zM355 818h1v1h-1zM1054 818h1v1h-1zM356 819h1v1h-1zM1055 819h1v1h-1zM357 820h1v1h-1zM1056 820h1v1h-1zM358 821h1v1h-1zM1057 821h1v1h-1zM359 822h1v1h-1zM1058 822h1v1h-1zM360 823h1v1h-1zM1059 823h1v1h-1zM361 824h1v1h-1zM1060 824h1v1h-1zM362 825h1v1h-1zM1061 825h1v1h-1zM363 826h1v1h-1zM1062 826h1v1h-1zM364 827h1v1h-1zM1063 827h1v1h-1zM365 828h1v1h-1zM1064 828h1v1h-1zM1065 829h1v1h-1zM1066 830h1v1h-1zM139 858h1v1h-1zM152 858h1v1h-1zM140 859h1v1h-1zM151 859h1v1h-1zM102 860h2v1h-2zM140 860h1v1h-1zM151 860h1v1h-1zM104 861h3v1h-3zM141 861h1v1h-1zM150 861h1v1h-1zM107 862h3v1h-3zM142 862h1v1h-1zM149 862h1v1h-1zM110 863h4v1h-4zM143 863h1v1h-1zM148 863h1v1h-1zM114 864h3v1h-3zM143 864h1v1h-1zM148 864h1v1h-1zM117 865h3v1h-3zM144 865h1v1h-1zM147 865h1v1h-1zM120 866h2v1h-2zM145 866h2v1h-2zM117 867h3v1h-3zM145 867h2v1h-2zM115 868h2v1h-2zM145 868h2v1h-2zM112 869h3v1h-3zM144 869h1v1h-1zM147 869h1v1h-1zM109 870h3v1h-3zM143 870h1v1h-1zM148 870h1v1h-1zM107 871h2v1h-2zM143 871h1v1h-1zM148 871h1v1h-1zM104 872h3v1h-3zM142 872h1v1h-1zM149 872h1v1h-1zM102 873h2v1h-2zM141 873h1v1h-1zM150 873h1v1h-1zM140 874h1v1h-1zM151 874h1v1h-1zM140 875h1v1h-1zM151 875h1v1h-1zM139 876h1v1h-1zM152 876h1v1h-1z" fill="#fff"/>
<rect x="1149" y="474" width="64" height="1" fill="#fff" />
<rect x="1181" y="443" width="1" height="64" fill="#fff" />
<rect x="1178" y="471" width="7" height="1" fill="#fff" />
<rect x="1178" y="477" width="7" height="1" fill="#fff" />
<rect x="1178" y="471" width="1" height="7" fill="#fff" />
<rect x="1184" y="471" width="1" height="7" fill="#fff" />
<rect x="1181" y="471" width="1" height="1" fill="#000" />
<rect x="1178" y="474" width="1" height="1" fill="#000" />
<rect x="1181" y="474" width="1" height="1" fill="#000" />
<rect x="1184" y="474" width="1" height="1" fill="#000" />
<rect x="1181" y="477" width="1" height="1" fill="#000" />
<rect x="1228" y="94" width="52" height="815" fill="#ece9d8" />
<rect x="1229" y="94" width="25" height="1" fill="#fff" />
<rect x="1229" y="94" width="1" height="435" fill="#fff" />
<rect x="1253" y="94" width="1" height="435" fill="#aca899" />
<rect x="1229" y="528" width="25" height="1" fill="#aca899" />
<rect x="1255" y="94" width="25" height="1" fill="#fff" />
<rect x="1255" y="94" width="1" height="391" fill="#fff" />
<rect x="1279" y="94" width="1" height="391" fill="#aca899" />
<rect x="1255" y="484" width="25" height="1" fill="#aca899" />
<rect x="1255" y="486" width="25" height="1" fill="#fff" />
<rect x="1255" y="486" width="1" height="105" fill="#fff" />
<rect x="1279" y="486" width="1" height="105" fill="#aca899" />
<rect x="1255" y="590" width="25" height="1" fill="#aca899" />
<rect x="1232" y="96" width="20" height="1" fill="#fff" />
<rect x="1232" y="97" width="20" height="1" fill="#f7f5ec" />
<rect x="1232" y="98" width="20" height="1" fill="#aca899" />
<rect x="1251" y="96" width="1" height="3" fill="#aca899" />
<rect x="1232" y="100" width="20" height="1" fill="#fff" />
<rect x="1232" y="101" width="20" height="1" fill="#f7f5ec" />
<rect x="1232" y="102" width="20" height="1" fill="#aca899" />
<rect x="1251" y="100" width="1" height="3" fill="#aca899" />
<rect x="1258" y="96" width="20" height="1" fill="#fff" />
<rect x="1258" y="97" width="20" height="1" fill="#f7f5ec" />
<rect x="1258" y="98" width="20" height="1" fill="#aca899" />
<rect x="1277" y="96" width="1" height="3" fill="#aca899" />
<rect x="1258" y="100" width="20" height="1" fill="#fff" />
<rect x="1258" y="101" width="20" height="1" fill="#f7f5ec" />
<rect x="1258" y="102" width="20" height="1" fill="#aca899" />
<rect x="1277" y="100" width="1" height="3" fill="#aca899" />
<rect x="1258" y="488" width="20" height="1" fill="#fff" />
<rect x="1258" y="489" width="20" height="1" fill="#f7f5ec" />
<rect x="1258" y="490" width="20" height="1" fill="#aca899" />
<rect x="1277" y="488" width="1" height="3" fill="#aca899" />
<rect x="1258" y="492" width="20" height="1" fill="#fff" />
<rect x="1258" y="493" width="20" height="1" fill="#f7f5ec" />
<rect x="1258" y="494" width="20" height="1" fill="#aca899" />
<rect x="1277" y="492" width="1" height="3" fill="#aca899" />
<g transform="translate(1233,108)"><path d="M2.5 13.5 L13.5 2.5" stroke="#000" stroke-width="1.3"/><rect x="1" y="12" width="3" height="3" fill="#0a64e0" stroke="#003c9c" stroke-width="0.5"/><rect x="12" y="1" width="3" height="3" fill="#0a64e0" stroke="#003c9c" stroke-width="0.5"/></g>
<g transform="translate(1233,130)"><path d="M1 15 L15 1" stroke="#000" stroke-width="1.2"/><path d="M0.5 15.5 l1 -5 l4 4z M15.5 0.5 l-5 1 l4 4z" fill="#000"/><rect x="6.5" y="6.5" width="3" height="3" fill="#0a64e0" stroke="#003c9c" stroke-width="0.5"/></g>
<g transform="translate(1233,152)"><path d="M2 12.5 H9 M9 5.5 q5 0 5 3.5 q0 3.5 -5 3.5" stroke="#222" stroke-width="1.2" fill="none"/><rect x="0.5" y="11" width="3" height="3" fill="#0a64e0" stroke="#003c9c" stroke-width="0.5"/><rect x="7.5" y="11" width="3" height="3" fill="#0a64e0" stroke="#003c9c" stroke-width="0.5"/><rect x="7.5" y="4" width="3" height="3" fill="#0a64e0" stroke="#003c9c" stroke-width="0.5"/></g>
<g transform="translate(1233,174)"><path d="M8 1.5 L14.5 6.5 L12 14.5 H4 L1.5 6.5 Z" fill="url(#gBlueSq)" stroke="#111" stroke-width="1.3"/></g>
<g transform="translate(1233,196)"><rect x="2.5" y="5.5" width="11" height="7" fill="url(#gBlueSq)" stroke="#111" stroke-width="1.3"/><rect x="0.5" y="11" width="3" height="3" fill="#0a64e0" stroke="#003c9c" stroke-width="0.5"/><rect x="12.5" y="3.5" width="3" height="3" fill="#0a64e0" stroke="#003c9c" stroke-width="0.5"/></g>
<g transform="translate(1233,218)"><path d="M2 14 Q3 4 13 2" stroke="#333" stroke-width="1.2" fill="none"/><rect x="0.5" y="12.5" width="3" height="3" fill="#0a64e0" stroke="#003c9c" stroke-width="0.5"/><rect x="4" y="5" width="3" height="3" fill="#0a64e0" stroke="#003c9c" stroke-width="0.5"/><rect x="12" y="0.5" width="3" height="3" fill="#0a64e0" stroke="#003c9c" stroke-width="0.5"/></g>
<g transform="translate(1233,240)"><circle cx="8" cy="8" r="6.5" fill="url(#gBlueSq)" stroke="#111" stroke-width="1.3"/><path d="M7 9 L12 4" stroke="#0a64e0" stroke-width="1.3"/><rect x="5.5" y="7.5" width="3" height="3" fill="#0a64e0" stroke="#003c9c" stroke-width="0.5"/></g>
<g transform="translate(1233,262)"><g stroke="#1a1a1a" stroke-width="1.4" fill="url(#gBlueSq)"><circle cx="4" cy="4" r="3.2"/><circle cx="9.5" cy="5.8" r="3.4"/><circle cx="3.8" cy="9" r="2.8"/><circle cx="11" cy="11.8" r="3.7"/></g><g fill="#eef3f8"><circle cx="4" cy="4" r="2.4"/><circle cx="9.5" cy="5.8" r="2.6"/><circle cx="3.8" cy="9" r="2"/><circle cx="11" cy="11.8" r="2.9" fill="#d4e2f0"/><rect x="4" y="5" width="6" height="5"/><path d="M7 8 L11 9 L9 12 Z"/></g></g>
<g transform="translate(1233,284)"><path d="M1 14 Q3 6 7 9 Q11 12 14 2" stroke="#333" stroke-width="1.2" fill="none"/></g>
<g transform="translate(1233,306)"><ellipse cx="8" cy="9" rx="6.5" ry="4.5" fill="url(#gBlueSq)" stroke="#111" stroke-width="1.3"/><rect x="0" y="7.5" width="3" height="3" fill="#0a64e0" stroke="#003c9c" stroke-width="0.5"/><rect x="13" y="7.5" width="3" height="3" fill="#0a64e0" stroke="#003c9c" stroke-width="0.5"/><rect x="6.5" y="3" width="3" height="3" fill="#0a64e0" stroke="#003c9c" stroke-width="0.5"/></g>
<g transform="translate(1233,328)"><path d="M2 7 Q4 1 10 2 Q15 3 14 8 Q12 11 9 10" stroke="#333" stroke-width="1.3" fill="#dde6f0"/><rect x="0.5" y="6" width="3" height="3" fill="#0a64e0" stroke="#003c9c" stroke-width="0.5"/><rect x="7.5" y="9" width="3" height="3" fill="#0a64e0" stroke="#003c9c" stroke-width="0.5"/></g>
<g transform="translate(1233,350)"><path d="M6.5 1.5 h6 l2.5 2.5 v9 h-8.5z" fill="url(#gBlueSq)" stroke="#4a76b8"/><rect x="1.5" y="4.5" width="8" height="6" fill="#f0e880" stroke="#24468a"/><circle cx="9" cy="11" r="3.5" fill="#e0d070" stroke="#24468a"/><path d="M12 16 l4 -4 v4z" fill="#000"/><rect x="0" y="8" width="3" height="3" fill="#0a64e0" stroke="#003c9c" stroke-width="0.5"/></g>
<g transform="translate(1233,372)"><rect x="2.5" y="2.5" width="8" height="6" fill="#f0e880" stroke="#24468a"/><circle cx="10" cy="10" r="4" fill="#e0d070" stroke="#24468a"/><rect x="1" y="7" width="3" height="3" fill="#0a64e0" stroke="#003c9c" stroke-width="0.5"/></g>
<g transform="translate(1233,394)"><rect x="6.5" y="7.5" width="3" height="3" fill="#0a64e0"/></g>
<g transform="translate(1233,416)"><rect x="4" y="4" width="8" height="8" fill="#fff"/><path d="M4 5 L11 12 M4 7.5 L8.5 12 M4 10 L6 12 M6.5 4 L12 9.5 M9 4 L12 7" stroke="#2a4a8a" stroke-width="1"/><path d="M0 3.5 H16 M0 12.5 H16 M3.5 0 V16 M12.5 0 V16" stroke="#2a5a9a" stroke-width="1.8"/><path d="M4.5 15.5 L15.5 4.5" stroke="#1a3a7a" stroke-width="1.4"/></g>
<g transform="translate(1233,438)"><defs><linearGradient id="gGr" x1="0" y1="0" x2="1" y2="1"><stop offset="0" stop-color="#3a4a7a"/><stop offset="1" stop-color="#c8c060"/></linearGradient></defs><path d="M4 4 h8 v8 h-8z" fill="url(#gGr)"/><path d="M0 3.5 H16 M0 12.5 H16 M3.5 0 V16 M12.5 0 V16" stroke="#1c2438" stroke-width="1.8"/><path d="M4.5 15.5 L15.5 4.5" stroke="#1c2438" stroke-width="1.4"/></g>
<g transform="translate(1233,460)"><path d="M1.5 2.5 h8 l5 5 v6 h-13z" fill="url(#gBlueSq)" stroke="#24468a" stroke-width="1.3"/><circle cx="7" cy="8" r="2.6" fill="none" stroke="#24468a" stroke-width="1.2"/></g>
<g transform="translate(1233,482)"><rect x="1.5" y="1.5" width="13" height="13" fill="#6a8ad0" stroke="#4a6ab0"/><rect x="2" y="2" width="12" height="2" fill="#7aa8f8"/><g fill="#fff"><rect x="2.5" y="5" width="3" height="2.5"/><rect x="6.5" y="5" width="3" height="2.5"/><rect x="10.5" y="5" width="3" height="2.5"/><rect x="2.5" y="8.5" width="3" height="2.5"/><rect x="6.5" y="8.5" width="3" height="2.5"/><rect x="10.5" y="8.5" width="3" height="2.5"/><rect x="2.5" y="12" width="3" height="2"/><rect x="6.5" y="12" width="3" height="2"/><rect x="10.5" y="12" width="3" height="2"/></g></g>
<g transform="translate(1233,504)"><text x="8" y="15" font-family="Liberation Sans" font-size="18" text-anchor="middle" fill="#000">A</text></g>
<g transform="translate(1259,108)"><path d="M0 14.5 H16" stroke="#222" stroke-width="1"/><g transform="translate(9.5,7.5) rotate(-45)"><rect x="-9" y="-3" width="18" height="6" rx="2" fill="#f0c010" stroke="#2a4a8a" stroke-width="0.8"/><rect x="-8.6" y="-2.6" width="4.5" height="5.2" rx="1.5" fill="#e05a5a"/><rect x="-4.1" y="-2.6" width="2.6" height="5.2" fill="#f4f4f4"/><rect x="-1.5" y="-2.6" width="1.8" height="5.2" fill="#50b8b0"/><rect x="0.3" y="-2.6" width="8.3" height="2" fill="#fff8b0" opacity="0.6"/></g></g>
<g transform="translate(1259,130)"><circle cx="4" cy="5" r="3.2" fill="#d8e0ea" stroke="#222"/><circle cx="9.5" cy="11" r="3.2" fill="#d8e0ea" stroke="#222"/><circle cx="12" cy="12" r="3.2" fill="#d8e0ea" stroke="#222"/><path d="M7 3 q5 -2 7 3" stroke="#24468a" stroke-width="1.6" fill="none"/><path d="M12 5 h4 l-2 3z" fill="#24468a"/></g>
<g transform="translate(1259,152)"><path d="M1.5 13.5 L6.5 2 V13.5Z M14.5 13.5 L9.5 2 V13.5Z" fill="url(#gBlueSq)" stroke="#111" stroke-width="1.2"/><path d="M8 0 V16" stroke="#0a64e0" stroke-width="1.4"/></g>
<g transform="translate(1259,174)"><path d="M2 14 q-2 -4 2 -5 v-4 q0 -3 4 -3 q4 0 4 3 v3 h3 v6z" fill="none" stroke="#111" stroke-width="1.2"/><path d="M4 12 h11 M5 10 h4 v-4 q0 -2 1.5 -2" stroke="#0a64e0" stroke-width="1.4" fill="none"/></g>
<g transform="translate(1259,196)"><g fill="url(#gBlueSq)" stroke="#111" stroke-width="1.2"><rect x="1.5" y="1.5" width="5" height="5"/><rect x="9.5" y="1.5" width="5" height="5"/><rect x="1.5" y="9.5" width="5" height="5"/><rect x="9.5" y="9.5" width="5" height="5"/></g></g>
<g transform="translate(1259,218)"><path d="M8 0 L11 4 H9 V7 H12 V5 L16 8 L12 11 V9 H9 V12 H11 L8 16 L5 12 H7 V9 H4 V11 L0 8 L4 5 V7 H7 V4 H5Z" fill="#3f6fa8"/></g>
<g transform="translate(1259,240)"><path d="M4 5 A6 6 0 1 0 10 2.5" stroke="#3f6fa8" stroke-width="2.4" fill="none"/><path d="M2 1 L8 1 L4 7 Z" fill="#3f6fa8"/></g>
<g transform="translate(1259,262)"><rect x="0.5" y="0.5" width="15" height="15" fill="url(#gBlueSq)"/><path d="M0.5 6.5 V0.5 H15.5 V15.5 H9.5" stroke="#3a68a0" stroke-width="1.2" fill="none"/><g fill="#000"><rect x="0" y="7" width="1" height="1"/><rect x="0" y="15" width="1" height="1"/><rect x="2" y="7" width="1" height="1"/><rect x="2" y="15" width="1" height="1"/><rect x="4" y="7" width="1" height="1"/><rect x="4" y="15" width="1" height="1"/><rect x="6" y="7" width="1" height="1"/><rect x="6" y="15" width="1" height="1"/><rect x="8" y="7" width="1" height="1"/><rect x="8" y="15" width="1" height="1"/><rect x="0" y="9" width="1" height="1"/><rect x="0" y="11" width="1" height="1"/><rect x="0" y="13" width="1" height="1"/><rect x="8" y="9" width="1" height="1"/><rect x="8" y="11" width="1" height="1"/><rect x="8" y="13" width="1" height="1"/></g></g>
<g transform="translate(1259,284)"><path d="M1.5 1.5 h5 v13 h-5z" fill="url(#gBlueSq)" stroke="#111" stroke-width="1.3"/><path d="M6.5 1 v14" stroke="#fff" stroke-width="1.2" stroke-dasharray="1 1"/><path d="M8 1.5 L15 14.5 H8 Z" fill="url(#gBlueSq)" stroke="#2a4a8a" stroke-width="1.2"/></g>
<g transform="translate(1259,306)"><path d="M0 8.5 H4" stroke="#111" stroke-width="1.3"/><path d="M6 8.5 H16" stroke="#0a64e0" stroke-width="1.2" stroke-dasharray="2 1.5"/><path d="M5 14 L10 3" stroke="#0a64e0" stroke-width="1.3"/></g>
<g transform="translate(1259,328)"><path d="M0 7.5 H4" stroke="#111" stroke-width="1.3"/><path d="M6 7.5 H10" stroke="#0a64e0" stroke-width="1.2" stroke-dasharray="2 1.5"/><path d="M10 13 L15 2" stroke="#0a64e0" stroke-width="1.3"/></g>
<g transform="translate(1259,350)"><rect x="1.5" y="4.5" width="13" height="10" fill="url(#gBlueSq)" stroke="#111" stroke-width="1.6"/><rect x="9" y="2.5" width="3" height="3" fill="#3f6fa8"/></g>
<g transform="translate(1259,372)"><rect x="1.5" y="4.5" width="13" height="10" fill="url(#gBlueSq)" stroke="#111" stroke-width="1.6"/><rect x="4" y="2.5" width="3" height="3" fill="#3f6fa8"/><rect x="10" y="2.5" width="3" height="3" fill="#3f6fa8"/></g>
<g transform="translate(1259,394)"><path d="M0 8 H16" stroke="#111" stroke-width="1.6"/><path d="M4 4 L8 8 L4 12Z M12 4 L8 8 L12 12Z" fill="#3f5f88"/></g>
<g transform="translate(1259,416)"><path d="M1.5 16 V3.5" stroke="#111" stroke-width="1.3"/><path d="M6 1.5 H16" stroke="#111" stroke-width="1.3"/><path d="M1.5 3 v-1.5 h4" stroke="#111" stroke-dasharray="1 1" fill="none"/><path d="M2 9 L7 2" stroke="#0a64e0" stroke-width="1.3"/></g>
<g transform="translate(1259,438)"><path d="M1.5 16 V8" stroke="#111" stroke-width="1.3"/><path d="M8 1.5 H16" stroke="#111" stroke-width="1.3"/><path d="M1.5 5 v-3.5 h5" stroke="#111" stroke-dasharray="1 1" fill="none"/><path d="M2 9 Q2 2 9 2" stroke="#0a64e0" stroke-width="1.6" fill="none"/></g>
<g transform="translate(1259,460)"><path d="M3 15 L6 12" stroke="#e01010" stroke-width="3.6"/><path d="M6 9 L9 6" stroke="#e01818" stroke-width="3"/><path d="M1 5 l4 4 M4 3 l1.5 5 M1 9 l4 2 M5 10 l6 4 M9 10 l3 1 M8 12 l1 3" stroke="#f0c010" stroke-width="1.3"/><path d="M1.5 6 h1 M4.5 5 h1 M11 10 h1 M11 12 h1 M7 14 h1" stroke="#1a1a1a" stroke-width="1"/><path d="M9 6.5 L12.5 3" stroke="#111" stroke-width="1.3"/><g fill="#7a9ad0"><rect x="11" y="1" width="1.2" height="1.2"/><rect x="13.5" y="1" width="1.2" height="1.2"/><rect x="9.5" y="3" width="1.2" height="1.2"/><rect x="15" y="3" width="1" height="1.2"/><rect x="11" y="5" width="1.2" height="1.2"/><rect x="13.5" y="5" width="1.2" height="1.2"/></g></g>
<g transform="translate(1259,500)"><rect x="1.5" y="0.5" width="8" height="5" fill="#e8eef6" stroke="#3f5f98"/><rect x="3.5" y="2.5" width="9" height="9" fill="#5f87b8" stroke="#3f5f98"/><rect x="7.5" y="9.5" width="8" height="6" fill="#dce8f0" stroke="#3f5f98"/></g>
<g transform="translate(1259,522)"><rect x="1.5" y="0.5" width="8" height="5" fill="#dce8f0" stroke="#3f5f98"/><rect x="4.5" y="3.5" width="9" height="9" fill="#5f87b8" stroke="#3f5f98"/><rect x="7.5" y="10.5" width="8" height="5" fill="#dce8f0" stroke="#3f5f98"/></g>
<g transform="translate(1259,544)"><rect x="1.5" y="0.5" width="10" height="9" fill="#5f87b8" stroke="#3f5f98"/><rect x="4.5" y="4.5" width="11" height="11" fill="#dce8f0" stroke="#3f5f98"/></g>
<g transform="translate(1259,566)"><rect x="1.5" y="0.5" width="10" height="9" fill="#5f87b8" stroke="#3f5f98"/><rect x="4.5" y="4.5" width="11" height="11" fill="#dce8f0" stroke="#3f5f98"/></g>
<rect x="2" y="893" width="1224" height="15" fill="#ece9d8" />
<rect x="2" y="893" width="18" height="15" fill="#ece9d8" />
<rect x="2" y="893" width="18" height="1" fill="#fff" />
<rect x="2" y="893" width="1" height="15" fill="#fff" />
<rect x="19" y="893" width="1" height="15" fill="#aca899" />
<rect x="2" y="907" width="18" height="1" fill="#aca899" />
<path d="M6 896h2v9h-2z M13 896v9l-5 -4.5z" fill="#000"/>
<rect x="20" y="893" width="18" height="15" fill="#ece9d8" />
<rect x="20" y="893" width="18" height="1" fill="#fff" />
<rect x="20" y="893" width="1" height="15" fill="#fff" />
<rect x="37" y="893" width="1" height="15" fill="#aca899" />
<rect x="20" y="907" width="18" height="1" fill="#aca899" />
<path d="M31 896v9l-5 -4.5z" fill="#000"/>
<rect x="38" y="893" width="18" height="15" fill="#ece9d8" />
<rect x="38" y="893" width="18" height="1" fill="#fff" />
<rect x="38" y="893" width="1" height="15" fill="#fff" />
<rect x="55" y="893" width="1" height="15" fill="#aca899" />
<rect x="38" y="907" width="18" height="1" fill="#aca899" />
<path d="M44 896v9l5 -4.5z" fill="#000"/>
<rect x="56" y="893" width="18" height="15" fill="#ece9d8" />
<rect x="56" y="893" width="18" height="1" fill="#fff" />
<rect x="56" y="893" width="1" height="15" fill="#fff" />
<rect x="73" y="893" width="1" height="15" fill="#aca899" />
<rect x="56" y="907" width="18" height="1" fill="#aca899" />
<path d="M62 896v9l5 -4.5z M67 896h2v9h-2z" fill="#000"/>
<rect x="2" y="908" width="1224" height="1" fill="#d8d4c4" />
<path d="M77 893 H132 L128 908 H82 Z" fill="#000"/>
<path d="M77.5 893 L81.5 907" stroke="#aca899" stroke-width="1"/>
<path d="M131.5 893 L127.5 907" stroke="#aca899" stroke-width="1"/>
<text x="85.5" y="904" font-family="Liberation Sans" font-size="11" font-weight="normal" fill="#fff" textLength="38.4" lengthAdjust="spacingAndGlyphs" >Модель</text>
<path d="M132.5 893 L129.5 906.5 Q130 907.5 133 907.5 H178.5 L182.5 893 Z" fill="#ece9d8" stroke="#000" stroke-width="1"/>
<rect x="131" y="892" width="53" height="1" fill="#000" />
<text x="136.5" y="903.5" font-family="Liberation Sans" font-size="11" font-weight="normal" fill="#000" textLength="36.1" lengthAdjust="spacingAndGlyphs" >Layout1</text>
<rect x="0" y="909" width="1280" height="1" fill="#fff" />
<rect x="0" y="910" width="1280" height="1" fill="#fff" />
<rect x="0" y="911" width="1280" height="4" fill="#f1efe2" />
<rect x="0" y="915" width="1280" height="1" fill="#000" />
<rect x="0" y="916" width="1280" height="52" fill="#ece9d8" />
<rect x="6" y="924" width="1" height="41" fill="#fff" />
<rect x="7" y="924" width="1" height="41" fill="#f7f5ec" />
<rect x="8" y="924" width="1" height="41" fill="#aca899" />
<rect x="6" y="964" width="3" height="1" fill="#aca899" />
<rect x="10" y="924" width="1" height="41" fill="#fff" />
<rect x="11" y="924" width="1" height="41" fill="#f7f5ec" />
<rect x="12" y="924" width="1" height="41" fill="#aca899" />
<rect x="10" y="964" width="3" height="1" fill="#aca899" />
<rect x="17" y="926" width="1256" height="42" fill="#fff" />
<rect x="17" y="926" width="1256" height="1" fill="#000" />
<rect x="17" y="926" width="1" height="42" fill="#000" />
<rect x="1273" y="926" width="1" height="25" fill="#fff" />
<rect x="18" y="949" width="1255" height="1" fill="#aca899" />
<rect x="16" y="968" width="1240" height="1" fill="#fff" />
<text x="19" y="939" font-family="Liberation Mono" font-size="13.33" font-weight="normal" fill="#000" textLength="245.5" lengthAdjust="spacingAndGlyphs" >Следующая точка или [Отменить]:</text>
<text x="19" y="964" font-family="Liberation Mono" font-size="13.33" font-weight="normal" fill="#000" textLength="62.5" lengthAdjust="spacingAndGlyphs" >Команда:</text>
<rect x="1257" y="928" width="14" height="9" rx="2" fill="url(#gBtn)" stroke="#fff" stroke-width="0.8"/>
<path d="M1258.5 936.8 H1269.5" stroke="#8aa8e0" stroke-width="1"/>
<path d="M1261 934.5 L1263.5 931.5 L1266 934.5" stroke="#4d6185" stroke-width="1.6" fill="none"/>
<rect x="1257" y="939" width="14" height="9" rx="2" fill="url(#gBtn)" stroke="#fff" stroke-width="0.8"/>
<path d="M1258.5 947.8 H1269.5" stroke="#8aa8e0" stroke-width="1"/>
<path d="M1261 941.5 L1263.5 944.5 L1266 941.5" stroke="#4d6185" stroke-width="1.6" fill="none"/>
<rect x="1186" y="951" width="87" height="17" fill="#ece9d8" />
<rect x="1254" y="951" width="1" height="17" fill="#fff" />
<rect x="1221" y="952" width="17" height="15" fill="#f6f5ef"/>
<rect x="1190" y="952" width="15" height="15" rx="2" fill="url(#gBtn)" stroke="#fff" stroke-width="0.8"/>
<path d="M1191.5 966.8 H1203.5" stroke="#8aa8e0" stroke-width="1"/>
<path d="M1199.5 955 L1194.5 959.5 L1199.5 964" stroke="#4d6185" stroke-width="2.2" fill="none"/>
<rect x="1206" y="952" width="15" height="15" rx="2" fill="url(#gBtn)" stroke="#fff" stroke-width="0.8"/>
<path d="M1207.5 966.8 H1219.5" stroke="#8aa8e0" stroke-width="1"/>
<path d="M1210.5 955v8M1212.5 955v8M1214.5 955v8M1216.5 955v8" stroke="#eef2fc" stroke-width="1"/>
<rect x="1238" y="952" width="15" height="15" rx="2" fill="url(#gBtn)" stroke="#fff" stroke-width="0.8"/>
<path d="M1239.5 966.8 H1251.5" stroke="#8aa8e0" stroke-width="1"/>
<path d="M1242.5 955 L1247.5 959.5 L1242.5 964" stroke="#4d6185" stroke-width="2.2" fill="none"/>
<rect x="0" y="969" width="1280" height="1" fill="#ece9d8" />
<rect x="0" y="970" width="1280" height="1" fill="#d5d1c0" />
<rect x="0" y="971" width="1280" height="1" fill="#fff" />
<rect x="0" y="972" width="1280" height="1" fill="#dcd8c8" />
<rect x="0" y="973" width="1280" height="21" fill="#ece9d8" />
<rect x="0" y="973" width="5" height="21" fill="#f0eee6"/>
<rect x="5" y="975" width="189" height="18" fill="#aca899" />
<rect x="6" y="976" width="187" height="16" fill="#f2f0e8" />
<text x="8" y="989" font-family="Liberation Sans" font-size="12.3" font-weight="normal" fill="#000" textLength="134.5" lengthAdjust="spacingAndGlyphs" >534.9703, 697.5952, 0.0000</text>
<rect x="198" y="975" width="26" height="18" fill="#ece9d8" />
<rect x="198" y="975" width="26" height="1" fill="#fff" />
<rect x="198" y="975" width="1" height="18" fill="#fff" />
<rect x="198" y="992" width="26" height="1" fill="#aca899" />
<rect x="223" y="975" width="1" height="18" fill="#aca899" />
<text x="200.5" y="989" font-family="Liberation Sans" font-size="12.3" font-weight="normal" fill="#000" textLength="22.0" lengthAdjust="spacingAndGlyphs" >ШАГ</text>
<rect x="228" y="975" width="39" height="18" fill="#ece9d8" />
<rect x="228" y="975" width="39" height="1" fill="#fff" />
<rect x="228" y="975" width="1" height="18" fill="#fff" />
<rect x="228" y="992" width="39" height="1" fill="#aca899" />
<rect x="266" y="975" width="1" height="18" fill="#aca899" />
<text x="230.5" y="989" font-family="Liberation Sans" font-size="12.3" font-weight="normal" fill="#000" textLength="34.5" lengthAdjust="spacingAndGlyphs" >СЕТКА</text>
<rect x="271" y="975" width="34" height="18" fill="#f4f3ee" />
<rect x="271" y="975" width="34" height="1" fill="#000" />
<rect x="271" y="975" width="1" height="18" fill="#000" />
<rect x="271" y="992" width="34" height="1" fill="#fff" />
<rect x="304" y="975" width="1" height="18" fill="#fff" />
<text x="274.5" y="990" font-family="Liberation Sans" font-size="12.3" font-weight="normal" fill="#000" textLength="29.0" lengthAdjust="spacingAndGlyphs" >ОРТО</text>
<rect x="310" y="975" width="67" height="18" fill="#ece9d8" />
<rect x="310" y="975" width="67" height="1" fill="#fff" />
<rect x="310" y="975" width="1" height="18" fill="#fff" />
<rect x="310" y="992" width="67" height="1" fill="#aca899" />
<rect x="376" y="975" width="1" height="18" fill="#aca899" />
<text x="311.7" y="989" font-family="Liberation Sans" font-size="12.3" font-weight="normal" fill="#000" textLength="63.400000000000034" lengthAdjust="spacingAndGlyphs" >ОТС-ПОЛЯР</text>
<rect x="381" y="975" width="64" height="18" fill="#f4f3ee" />
<rect x="381" y="975" width="64" height="1" fill="#000" />
<rect x="381" y="975" width="1" height="18" fill="#000" />
<rect x="381" y="992" width="64" height="1" fill="#fff" />
<rect x="444" y="975" width="1" height="18" fill="#fff" />
<text x="384.9" y="990" font-family="Liberation Sans" font-size="12.3" font-weight="normal" fill="#000" textLength="58.30000000000001" lengthAdjust="spacingAndGlyphs" >ПРИВЯЗКА</text>
<rect x="448" y="975" width="74" height="18" fill="#f4f3ee" />
<rect x="448" y="975" width="74" height="1" fill="#000" />
<rect x="448" y="975" width="1" height="18" fill="#000" />
<rect x="448" y="992" width="74" height="1" fill="#fff" />
<rect x="521" y="975" width="1" height="18" fill="#fff" />
<text x="451.3" y="990" font-family="Liberation Sans" font-size="12.3" font-weight="normal" fill="#000" textLength="68.09999999999997" lengthAdjust="spacingAndGlyphs" >ОТС-ОБЪЕКТ</text>
<rect x="525" y="975" width="36" height="18" fill="#f4f3ee" />
<rect x="525" y="975" width="36" height="1" fill="#000" />
<rect x="525" y="975" width="1" height="18" fill="#000" />
<rect x="525" y="992" width="36" height="1" fill="#fff" />
<rect x="560" y="975" width="1" height="18" fill="#fff" />
<text x="528.6" y="990" font-family="Liberation Sans" font-size="12.3" font-weight="normal" fill="#000" textLength="30.399999999999977" lengthAdjust="spacingAndGlyphs" >ДПСК</text>
<rect x="564" y="975" width="30" height="18" fill="#f4f3ee" />
<rect x="564" y="975" width="30" height="1" fill="#000" />
<rect x="564" y="975" width="1" height="18" fill="#000" />
<rect x="564" y="992" width="30" height="1" fill="#fff" />
<rect x="593" y="975" width="1" height="18" fill="#fff" />
<text x="567.8" y="990" font-family="Liberation Sans" font-size="12.3" font-weight="normal" fill="#000" textLength="23.800000000000068" lengthAdjust="spacingAndGlyphs" >ДИН</text>
<rect x="597" y="975" width="26" height="18" fill="#ece9d8" />
<rect x="597" y="975" width="26" height="1" fill="#fff" />
<rect x="597" y="975" width="1" height="18" fill="#fff" />
<rect x="597" y="992" width="26" height="1" fill="#aca899" />
<rect x="622" y="975" width="1" height="18" fill="#aca899" />
<text x="599.7" y="989" font-family="Liberation Sans" font-size="12.3" font-weight="normal" fill="#000" textLength="21.299999999999955" lengthAdjust="spacingAndGlyphs" >ВЕС</text>
<rect x="626" y="975" width="53" height="18" fill="#f4f3ee" />
<rect x="626" y="975" width="53" height="1" fill="#000" />
<rect x="626" y="975" width="1" height="18" fill="#000" />
<rect x="626" y="992" width="53" height="1" fill="#fff" />
<rect x="678" y="975" width="1" height="18" fill="#fff" />
<text x="629.2" y="990" font-family="Liberation Sans" font-size="12.3" font-weight="normal" fill="#000" textLength="47.799999999999955" lengthAdjust="spacingAndGlyphs" >МОДЕЛЬ</text>
<rect x="1174" y="975" width="64" height="18" fill="#ece9d8" />
<rect x="1174" y="975" width="64" height="1" fill="#aca899" />
<rect x="1174" y="975" width="1" height="18" fill="#aca899" />
<rect x="1174" y="992" width="64" height="1" fill="#fff" />
<rect x="1237" y="975" width="1" height="18" fill="#fff" />
<g transform="translate(1178,976)"><path d="M5 1 Q0 4 2 10 L0 12 Q3 14 6 12 Q9 11 10 8 Z" fill="#d8e0f0" stroke="#4a6aa8" stroke-width="1"/><path d="M4 3 Q6 8 10 8" stroke="#8aa0d0" stroke-width="1.2" fill="none"/><path d="M7 6 L11 2 M10 1.5 l1.5 1.5" stroke="#2a4a88" stroke-width="1.2"/><path d="M9.5 5.5 L15.5 15.5 H3.5 Z" fill="#f8e020" stroke="#b89800" stroke-width="0.9"/><rect x="8.8" y="8.5" width="1.5" height="4" fill="#000"/><rect x="8.8" y="13.3" width="1.5" height="1.3" fill="#000"/></g>
<g transform="translate(1198,976)"><path d="M9 7 V4 Q9 1 12 1 Q15 1 15 4 V7" stroke="#2a2a10" stroke-width="2.6" fill="none"/><path d="M9 7 V4 Q9 1 12 1 Q15 1 15 4 V7" stroke="#f0c800" stroke-width="1.2" fill="none"/><rect x="0.5" y="6.5" width="11" height="9" rx="2" fill="#e8c010" stroke="#2a2a10" stroke-width="1"/><path d="M1.5 9 h9 M1.5 11 h9 M1.5 13 h9" stroke="#8a7000" stroke-width="0.8"/><rect x="5.5" y="8" width="1.2" height="6" fill="#fffbc0"/></g>
<defs><linearGradient id="gTd" x1="0" y1="0" x2="1" y2="0"><stop offset="0" stop-color="#2a5a98"/><stop offset="0.5" stop-color="#8aa4c4"/><stop offset="1" stop-color="#3a6aa0"/></linearGradient></defs><g transform="translate(1218,976)"><path d="M0.5 0.5 h9 l4 4 v11 h-13z" fill="url(#gTd)" stroke="#24468a"/><path d="M9.5 0.5 v4 h4" fill="#d0dcea" stroke="#24468a" stroke-width="0.8"/><path d="M5 1.5 v13 M1.5 5 h7" stroke="#fff" stroke-width="1.1"/><circle cx="5" cy="5" r="1.6" fill="none" stroke="#fff" stroke-width="1"/><circle cx="12" cy="12" r="4.3" fill="#10a010"/><path d="M9.8 12 l1.6 1.8 l3 -3.2" stroke="#fff" stroke-width="1.7" fill="none"/></g>
<path d="M1242 985 h11 l-5.5 5z" fill="#000"/>
<rect x="1260.5" y="975.5" width="15" height="15" fill="#4a6ab0" stroke="#24468a"/><rect x="1262.5" y="977.5" width="11" height="11" fill="#c8d8ec" stroke="#fff" stroke-width="0.8"/>
<defs><linearGradient id="gTb" x1="0" y1="0" x2="0" y2="1"><stop offset="0" stop-color="#3168d5"/><stop offset="1" stop-color="#4993e6"/></linearGradient><linearGradient id="gSt" x1="0" y1="0" x2="0" y2="1"><stop offset="0" stop-color="#3c9a3c"/><stop offset="1" stop-color="#88c888"/></linearGradient></defs>
<rect x="0" y="994" width="1280" height="4" fill="url(#gTb)" />
<rect x="0" y="994" width="1280" height="1" fill="#3a78e0" />
<rect x="1152" y="994" width="128" height="4" fill="#1ea0f0" />
<rect x="1152" y="994" width="128" height="1" fill="#18a8f8" />
<rect x="0" y="994" width="93" height="4" fill="url(#gSt)" />
<rect x="0" y="994" width="1" height="4" fill="#1a5a5a" />
</svg></body></html>
